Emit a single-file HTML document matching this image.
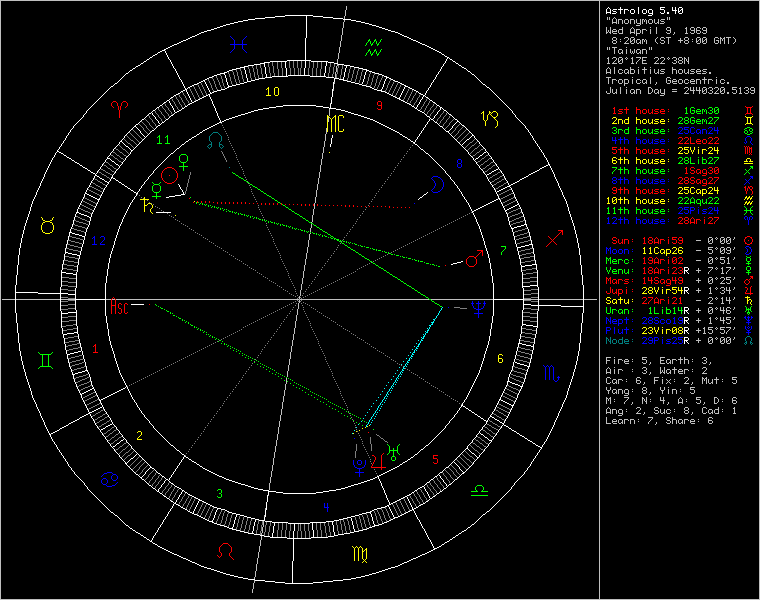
<!DOCTYPE html>
<html lang="en"><head><meta charset="utf-8"><title>Astrolog 5.40 - wheel chart</title>
<style>
html,body{margin:0;padding:0;background:#000}
body{position:relative;width:760px;height:600px;overflow:hidden;font-family:"Liberation Mono",monospace}
#info{position:absolute;left:606px;top:5px;width:150px;height:430px;font:10px/10px "Liberation Mono",monospace;color:#bfbfbf}
#info div{position:absolute;left:0;white-space:pre;height:10px}
#chart{position:absolute;left:0;top:0;display:block}
</style></head>
<body>
<div id="info">
<div style="top:0px"><span style="color:#fff">Astrolog 5.40</span></div>
<div style="top:10px"><span style="color:#bfbfbf">"Anonymous"</span></div>
<div style="top:20px"><span style="color:#bfbfbf">Wed April 9, 1969</span></div>
<div style="top:30px"><span style="color:#bfbfbf"> 8:20am (ST +8:00 GMT)</span></div>
<div style="top:40px"><span style="color:#bfbfbf">"Taiwan"</span></div>
<div style="top:50px"><span style="color:#bfbfbf">120°17E 22°38N</span></div>
<div style="top:60px"><span style="color:#bfbfbf">Alcabitius houses.</span></div>
<div style="top:70px"><span style="color:#bfbfbf">Tropical, Geocentric.</span></div>
<div style="top:80px"><span style="color:#bfbfbf">Julian Day = 2440320.5139</span></div>
<div style="top:100px"><span style="color:#f00"> 1st house:</span> <span style="color:#0f0"> 1Gem30</span></div>
<div style="top:110px"><span style="color:#ff0"> 2nd house:</span> <span style="color:#0f0">28Gem27</span></div>
<div style="top:120px"><span style="color:#0f0"> 3rd house:</span> <span style="color:#00f">25Can24</span></div>
<div style="top:130px"><span style="color:#00f"> 4th house:</span> <span style="color:#f00">22Leo22</span></div>
<div style="top:140px"><span style="color:#f00"> 5th house:</span> <span style="color:#ff0">25Vir24</span></div>
<div style="top:150px"><span style="color:#ff0"> 6th house:</span> <span style="color:#0f0">28Lib27</span></div>
<div style="top:160px"><span style="color:#0f0"> 7th house:</span> <span style="color:#f00"> 1Sag30</span></div>
<div style="top:170px"><span style="color:#00f"> 8th house:</span> <span style="color:#f00">28Sag27</span></div>
<div style="top:180px"><span style="color:#f00"> 9th house:</span> <span style="color:#ff0">25Cap24</span></div>
<div style="top:190px"><span style="color:#ff0">10th house:</span> <span style="color:#0f0">22Aqu22</span></div>
<div style="top:200px"><span style="color:#0f0">11th house:</span> <span style="color:#00f">25Pis24</span></div>
<div style="top:210px"><span style="color:#00f">12th house:</span> <span style="color:#f00">28Ari27</span></div>
<div style="top:230px"><span style="color:#f00"> Sun:</span> <span style="color:#f00">18Ari59</span>  <span style="color:#bfbfbf">- 0°00'</span></div>
<div style="top:240px"><span style="color:#00f">Moon:</span> <span style="color:#ff0">11Cap26</span>  <span style="color:#bfbfbf">- 5°09'</span></div>
<div style="top:250px"><span style="color:#0f0">Merc:</span> <span style="color:#f00">19Ari02</span>  <span style="color:#bfbfbf">- 0°51'</span></div>
<div style="top:260px"><span style="color:#0f0">Venu:</span> <span style="color:#f00">18Ari23</span><span style="color:#fff">R</span> <span style="color:#bfbfbf">+ 7°17'</span></div>
<div style="top:270px"><span style="color:#f00">Mars:</span> <span style="color:#f00">14Sag49</span>  <span style="color:#bfbfbf">+ 0°25'</span></div>
<div style="top:280px"><span style="color:#f00">Jupi:</span> <span style="color:#ff0">28Vir54</span><span style="color:#fff">R</span> <span style="color:#bfbfbf">+ 1°34'</span></div>
<div style="top:290px"><span style="color:#ff0">Satu:</span> <span style="color:#f00">27Ari21</span>  <span style="color:#bfbfbf">- 2°14'</span></div>
<div style="top:300px"><span style="color:#0f0">Uran:</span> <span style="color:#0f0"> 1Lib14</span><span style="color:#fff">R</span> <span style="color:#bfbfbf">+ 0°46'</span></div>
<div style="top:310px"><span style="color:#00f">Nept:</span> <span style="color:#00f">28Sco19</span><span style="color:#fff">R</span> <span style="color:#bfbfbf">+ 1°45'</span></div>
<div style="top:320px"><span style="color:#00f">Plut:</span> <span style="color:#ff0">23Vir08</span><span style="color:#fff">R</span> <span style="color:#bfbfbf">+15°57'</span></div>
<div style="top:330px"><span style="color:#007f7f">Node:</span> <span style="color:#00f">29Pis25</span><span style="color:#fff">R</span> <span style="color:#bfbfbf">+ 0°00'</span></div>
<div style="top:350px"><span style="color:#bfbfbf">Fire: 5, Earth: 3,</span></div>
<div style="top:360px"><span style="color:#bfbfbf">Air : 3, Water: 2</span></div>
<div style="top:370px"><span style="color:#bfbfbf">Car: 6, Fix: 2, Mut: 5</span></div>
<div style="top:380px"><span style="color:#bfbfbf">Yang: 8, Yin: 5</span></div>
<div style="top:390px"><span style="color:#bfbfbf">M: 7, N: 4, A: 5, D: 6</span></div>
<div style="top:400px"><span style="color:#bfbfbf">Ang: 2, Suc: 8, Cad: 1</span></div>
<div style="top:410px"><span style="color:#bfbfbf">Learn: 7, Share: 6</span></div>
</div>
<svg id="chart" width="760" height="600" viewBox="0 0 760 600" shape-rendering="crispEdges" fill="none" stroke-width="1" role="img" aria-label="Astrolog 5.40 wheel chart">
<rect width="760" height="600" fill="#000"/>
<g class="axes"><title>Ascendant-Descendant and Midheaven-Nadir axes</title><path stroke="#bfbfbf" transform="translate(0 .5)" d="M0 0m2 299h595"/><path stroke="#bfbfbf" transform="translate(.5)" d="M0 0m252 589v4m1-10v6m1-12v6m1-12v6m1-13v7m1-13v6m1-12v6m1-12v6m1-12v6m1-13v7m1-13v6m1-12v6m1-12v6m1-13v7m1-13v6m1-12v6m1-12v6m1-13v7m1-13v6m1-12v6m1-12v6m1-13v7m1-13v6m1-12v6m1-12v6m1-12v6m1-13v7m1-13v6m1-12v6m1-12v6m1-13v7m1-13v6m1-12v6m1-12v6m1-13v7m1-13v6m1-12v6m1-12v6m1-13v7m1-13v6m1-12v6m1-12v6m1-12v6m1-13v7m1-13v6m1-12v6m1-12v6m1-13v3m0 1v3m1-13v6m1-12v6m1-12v6m1-13v7m1-13v6m1-12v6m1-12v6m1-12v6m1-13v7m1-13v6m1-12v6m1-12v6m1-13v7m1-13v6m1-12v6m1-12v6m1-13v7m1-13v6m1-12v6m1-12v6m1-13v7m1-13v6m1-12v6m1-12v6m1-12v6m1-13v7m1-13v6m1-12v6m1-12v6m1-13v7m1-13v6m1-12v6m1-12v6m1-13v7m1-13v6m1-12v6m1-12v6m1-13v7m1-13v6m1-12v6m1-12v6m1-12v6m1-13v7m1-13v6m1-12v6m1-12v6m1-10v4"/></g>
<g class="degree-ticks"><title>Zodiac degree ring</title><path stroke="#7f7f7f" transform="translate(0 .5)" d="M0 0m200 82h1m197 0h1m-202 2h1m203 0h1m-209 2h1m-5 2h1m219 0h1m3 1h1m-232 3h1m233 0h1m-239 2h1m241 0h1m-237 1h1m229 0h1m-240 1h1m4 1h1m237 0h1m-248 1h1m255 0h1m-251 1h1m9 1h1m223 0h1m18 0h1m-258 1h1m251 0h1m-243 1h1m222 0h1m8 0h1m-252 1h1m24 0h1m219 0h1m24 0h1m-255 1h1m-20 1h1m23 0h1m227 0h1m13 0h1m9 0h1m-272 1h1m9 0h1m245 0h1m9 0h1m-276 1h1m9 0h1m14 0h1m248 0h1m-269 1h1m271 0h1m-272 1h1m13 0h1m241 0h1m13 0h1m-281 1h1m4 0h1m9 0h1m259 0h1m14 0h1m-285 1h1m9 0h1m257 0h1m-263 1h1m256 0h1m8 0h1m14 0h1m-292 1h1m10 0h1m263 0h1m10 0h1m-286 1h1m4 0h1m9 0h1m253 0h1m14 0h1m-294 1h1m14 0h1m281 0h1m4 0h1m-282 1h1m259 0h1m14 0h1m-286 1h1m279 0h1m-296 1h1m5 0h1m9 0h1m4 0h1m272 0h1m9 0h1m5 0h1m-310 1h1m5 0h1m290 0h1m4 0h1m5 0h1m-308 1h1m294 0h1m10 0h1m-312 1h1m5 0h1m14 0h1m273 0h1m14 0h1m-310 1h1m5 0h1m4 0h1m291 0h1m4 0h1m-313 1h1m4 0h1m10 0h1m284 0h1m4 0h1m15 0h1m-322 1h1m4 0h1m314 0h1m-320 1h1m4 0h1m4 0h1m297 0h1m9 0h1m-318 1h1m9 0h1m4 0h1m285 0h1m4 0h1m9 0h1m5 0h1m-322 1h1m9 0h1m293 0h1m9 0h1m5 0h1m-316 1h1m5 0h1m291 0h1m15 0h1m-330 1h1m15 0h1m311 0h1m5 0h1m-334 1h1m10 0h1m4 0h1m304 0h1m4 0h1m5 0h1m-332 1h1m10 0h1m4 0h1m302 0h1m10 0h1m-336 1h1m5 0h1m10 0h1m305 0h1m10 0h1m5 0h1m-340 1h1m5 0h1m10 0h1m303 0h1m5 0h1m4 0h1m5 0h1m-338 1h1m5 0h1m318 0h1m4 0h1m5 0h1m-342 1h1m5 0h1m5 0h1m316 0h1m4 0h1m5 0h1m-340 1h1m5 0h1m5 0h1m314 0h1m4 0h1m5 0h1m-338 1h1m5 0h1m5 0h1m317 0h1m5 0h1m-342 1h1m5 0h1m5 0h1m5 0h1m315 0h1m5 0h1m11 0h1m-352 1h1m5 0h1m5 0h1m5 0h1m313 0h1m5 0h1m11 0h1m-350 1h1m5 0h2m4 0h1m323 0h1m11 0h1m-348 1h1m6 0h1m4 0h1m321 0h1m11 0h1m4 0h1m-351 1h1m6 0h1m4 0h1m319 0h1m10 0h2m4 0h1m-349 1h2m5 0h1m333 0h1m5 0h1m-358 1h1m11 0h1m5 0h1m331 0h1m5 0h1m5 0h1m-362 1h1m11 0h1m335 0h1m4 0h2m5 0h1m-360 1h1m11 0h1m333 0h1m4 0h1m6 0h1m-358 1h1m11 0h1m331 0h1m4 0h1m6 0h1m-363 1h1m6 0h1m346 0h1m5 0h2m6 0h1m-368 1h2m5 0h2m343 0h1m5 0h1m6 0h2m-365 1h1m6 0h1m341 0h1m5 0h1m6 0h1m-369 1h1m6 0h1m6 0h1m345 0h1m6 0h1m-367 1h2m5 0h2m5 0h1m343 0h1m5 0h2m-364 1h1m6 0h1m5 0h1m341 0h1m5 0h1m-367 1h1m5 0h1m6 0h1m351 0h1m12 0h1m-378 1h2m4 0h2m5 0h2m347 0h2m11 0h2m-375 1h1m5 0h1m6 0h1m345 0h1m12 0h1m-372 1h1m5 0h1m363 0h1m6 0h1m-377 1h2m4 0h2m359 0h2m5 0h2m-374 1h1m5 0h1m357 0h1m6 0h1m-371 1h1m361 0h1m6 0h1m-383 1h1m13 0h2m357 0h2m5 0h2m6 0h1m-388 1h2m13 0h1m355 0h1m6 0h1m6 0h2m-385 1h1m374 0h1m6 0h1m-388 1h1m5 0h1m371 0h2m6 0h1m5 0h1m-392 1h2m4 0h2m368 0h1m6 0h2m4 0h2m-389 1h1m5 0h1m373 0h1m5 0h1m-386 1h1m5 0h1m371 0h1m5 0h1m-392 1h1m7 0h2m4 0h2m367 0h2m4 0h2m-390 1h2m7 0h1m5 0h1m365 0h1m5 0h1m-386 1h2m6 0h1m375 0h1m-390 1h1m6 0h1m6 0h2m371 0h2m13 0h1m-402 1h2m5 0h2m6 0h1m369 0h1m13 0h2m-399 1h1m6 0h2m387 0h1m-396 1h2m6 0h2m383 0h2m-393 1h2m6 0h1m380 0h2m7 0h1m-397 1h1m385 0h1m7 0h2m-395 1h2m381 0h2m7 0h1m-406 1h1m14 0h1m379 0h1m7 0h2m5 0h1m-410 1h2m398 0h2m5 0h2m-407 1h1m396 0h1m6 0h1m-404 1h2m392 0h2m5 0h2m-409 1h1m7 0h2m389 0h1m5 0h2m7 0h1m-414 1h2m7 0h1m393 0h1m7 0h2m-411 1h1m7 0h2m389 0h2m7 0h1m-415 1h1m6 0h2m7 0h1m387 0h1m7 0h2m-413 1h2m6 0h2m399 0h2m-409 1h2m6 0h1m397 0h1m-405 1h2m5 0h2m393 0h2m-410 1h1m7 0h2m5 0h1m391 0h1m13 0h2m-422 1h2m7 0h2m407 0h2m-418 1h2m7 0h2m403 0h2m-414 1h2m7 0h1m400 0h2m-410 1h2m404 0h2m8 0h2m-416 1h2m400 0h2m8 0h2m-412 1h2m397 0h1m8 0h2m-4 1h2m-423 1h1m418 0h2m8 0h2m-430 1h2m414 0h2m8 0h2m-426 1h2m411 0h1m8 0h2m-429 1h1m6 0h2m416 0h2m6 0h2m-434 1h2m6 0h2m412 0h2m6 0h2m-430 1h2m6 0h2m408 0h2m6 0h2m-426 1h2m6 0h2m405 0h1m6 0h2m-431 1h2m7 0h2m416 0h2m-427 1h2m7 0h2m412 0h2m-423 1h2m7 0h2m409 0h1m-419 1h2m-9 1h2m7 0h2m428 0h2m-439 1h2m7 0h2m424 0h2m-435 1h2m7 0h2m419 0h3m-431 1h3m423 0h2m-425 1h2m419 0h2m9 0h2m-432 1h2m415 0h2m9 0h2m-5 1h3m-6 1h3m-439 1h2m432 0h2m9 0h2m-445 1h2m428 0h2m9 0h2m-441 1h2m434 0h3m-437 1h3m429 0h2m-442 1h2m9 0h2m425 0h2m9 0h2m-449 1h3m8 0h2m421 0h2m8 0h3m-444 1h4m433 0h4m-437 1h3m427 0h3m-443 1h2m11 0h2m423 0h2m-438 1h3m0 1h4m0 1h3m-13 1h2m11 0h2m438 0h2m-453 1h3m445 0h3m-448 1h4m437 0h4m-441 1h3m431 0h3m-434 1h2m427 0h2m12 0h2m-5 1h3m-7 1h4m-7 1h3m-451 1h3m443 0h2m10 0h3m-458 1h4m447 0h4m-451 1h4m439 0h4m-443 1h3m433 0h3m-451 1h3m457 0h3m-460 1h4m449 0h4m-453 1h4m441 0h4m-445 1h3m435 0h3m-453 1h3m0 1h4m0 1h4m0 1h3m-15 1h3m461 0h3m-464 1h4m452 0h5m-457 1h5m443 0h4m-447 1h3m437 0h3m10 1h3m-8 1h5m-9 1h4m-7 1h3m-457 1h4m461 0h4m-465 1h6m449 0h6m-455 1h4m441 0h4m-460 2h4m463 0h4m-467 1h6m451 0h6m-457 1h4m443 0h4m-462 2h4m0 1h7m0 1h4m-15 2h4m465 0h4m-469 1h6m453 0h6m-459 1h4m445 0h4m7 2h4m-11 1h7m-11 1h4m-464 3h7m461 0h7m-468 1h7m447 0h7m-469 3h7m462 0h8m-470 1h8m447 0h7m-469 3h7m0 1h8m-15 3h7m463 0h7m-470 1h7m449 0h7m0 3h7m-14 1h7m-470 3h7m463 0h7m-470 1h7m449 0h7m-463 2h7m449 0h7m-470 1h7m463 0h7m-470 3h7m-14 1h7m0 3h7m449 0h7m-470 1h7m463 0h7m-15 3h7m0 1h8m-470 3h8m447 0h7m-469 1h7m462 0h8m-469 3h7m447 0h7m-468 1h7m461 0h7m-464 3h4m-11 1h7m-11 1h4m7 2h4m445 0h4m-459 1h6m453 0h6m-469 1h4m465 0h4m-15 2h4m0 1h7m0 1h4m-462 2h4m443 0h4m-457 1h6m451 0h6m-467 1h4m463 0h4m-460 2h4m441 0h4m-455 1h6m449 0h6m-465 1h4m461 0h4m-457 1h3m-8 1h5m-9 1h4m-7 1h3m10 1h3m437 0h3m-448 1h5m443 0h4m-456 1h4m452 0h5m-464 1h3m461 0h3m-15 1h3m0 1h4m0 1h4m0 1h3m-453 1h3m435 0h3m-445 1h4m441 0h4m-453 1h4m449 0h4m-460 1h3m457 0h3m-451 1h3m433 0h3m-443 1h4m439 0h4m-451 1h4m447 0h4m-458 1h3m10 0h2m443 0h3m-451 1h3m-7 1h4m-7 1h3m-5 1h2m12 0h2m427 0h2m-434 1h3m431 0h3m-441 1h4m437 0h4m-448 1h3m445 0h3m-453 1h2m438 0h2m11 0h2m-13 1h3m0 1h4m0 1h3m-438 1h2m423 0h2m11 0h2m-443 1h3m427 0h3m-437 1h4m433 0h4m-444 1h3m8 0h2m421 0h2m8 0h3m-449 1h2m9 0h2m425 0h2m9 0h2m-443 1h3m429 0h2m-436 1h2m434 0h3m-441 1h2m9 0h2m428 0h2m-445 1h2m9 0h2m432 0h2m-439 1h3m-6 1h3m-5 1h2m9 0h2m415 0h2m-432 1h2m9 0h2m419 0h2m-426 1h3m423 0h2m-430 1h2m420 0h2m6 0h3m-435 1h2m424 0h2m7 0h2m-439 1h2m428 0h2m7 0h2m-9 1h2m-420 1h2m409 0h1m8 0h2m-424 1h2m412 0h2m8 0h2m-428 1h2m416 0h2m8 0h2m-432 1h2m6 0h2m405 0h1m6 0h2m-426 1h2m6 0h2m408 0h2m6 0h2m-430 1h2m6 0h2m412 0h2m6 0h2m-433 1h1m6 0h2m416 0h2m6 0h2m-430 1h2m8 0h2m410 0h2m-426 1h2m8 0h2m414 0h2m-429 1h1m8 0h2m418 0h2m-424 1h2m-4 1h2m8 0h2m397 0h1m-412 1h2m8 0h2m400 0h2m-415 1h1m8 0h2m404 0h2m-410 1h2m401 0h1m6 0h2m-414 1h2m404 0h2m6 0h2m-418 1h2m408 0h2m6 0h2m-421 1h1m14 0h1m391 0h1m5 0h2m6 0h2m-410 1h2m393 0h2m5 0h2m-405 1h1m397 0h1m6 0h2m-409 1h2m399 0h2m6 0h2m-413 1h2m7 0h1m387 0h1m7 0h2m6 0h1m-415 1h1m7 0h2m389 0h2m7 0h1m-411 1h2m7 0h1m393 0h1m7 0h2m-414 1h1m7 0h2m5 0h1m389 0h2m7 0h1m-409 1h2m5 0h2m392 0h2m-404 1h1m6 0h1m396 0h1m-407 1h2m5 0h2m398 0h2m-410 1h1m5 0h2m7 0h1m379 0h1m14 0h1m-406 1h1m7 0h2m381 0h2m-395 1h2m7 0h1m385 0h1m-397 1h1m7 0h2m380 0h1m6 0h2m-393 1h2m383 0h2m6 0h2m-396 1h1m387 0h2m6 0h1m-399 1h2m13 0h1m369 0h1m6 0h1m6 0h2m-402 1h1m13 0h2m371 0h2m5 0h2m6 0h1m-390 1h1m375 0h1m6 0h2m-386 1h1m5 0h1m365 0h1m5 0h1m7 0h2m-390 1h2m4 0h2m367 0h2m4 0h2m7 0h1m-392 1h1m5 0h1m371 0h1m5 0h1m-386 1h1m5 0h1m373 0h1m5 0h1m-389 1h2m4 0h2m6 0h1m368 0h2m4 0h2m-392 1h1m5 0h1m6 0h2m371 0h1m5 0h1m-388 1h1m6 0h1m374 0h1m-385 1h2m6 0h1m6 0h1m355 0h1m13 0h2m-388 1h1m6 0h2m5 0h2m357 0h2m13 0h1m-383 1h1m6 0h1m361 0h1m-371 1h1m6 0h1m357 0h1m5 0h1m-374 1h2m5 0h2m359 0h2m4 0h2m-377 1h1m6 0h1m363 0h1m5 0h1m-372 1h1m12 0h1m345 0h1m6 0h1m5 0h1m-375 1h2m11 0h2m347 0h2m5 0h2m4 0h2m-378 1h1m12 0h1m351 0h1m6 0h1m5 0h1m-367 1h1m5 0h1m341 0h1m5 0h1m6 0h1m-364 1h2m5 0h1m343 0h1m5 0h2m5 0h2m-367 1h1m6 0h1m345 0h1m6 0h1m6 0h1m-369 1h1m6 0h1m5 0h1m341 0h1m6 0h1m-365 1h2m5 0h2m5 0h1m343 0h1m6 0h2m-368 1h1m6 0h1m6 0h1m345 0h2m6 0h1m-363 1h1m6 0h1m4 0h1m331 0h1m11 0h1m-358 1h1m5 0h2m4 0h1m333 0h1m11 0h1m-360 1h1m5 0h1m5 0h1m335 0h1m11 0h1m-362 1h1m5 0h1m5 0h1m331 0h1m5 0h1m11 0h1m-358 1h1m4 0h2m333 0h1m5 0h1m-348 1h1m4 0h1m11 0h1m319 0h1m4 0h1m5 0h2m-351 1h1m4 0h1m11 0h1m321 0h1m4 0h1m6 0h1m-348 1h1m11 0h1m323 0h1m4 0h1m6 0h1m-350 1h1m11 0h1m5 0h1m313 0h1m5 0h1m4 0h2m5 0h1m-352 1h1m11 0h1m5 0h1m315 0h1m5 0h1m5 0h1m5 0h1m-342 1h1m5 0h1m317 0h1m5 0h1m5 0h1m-338 1h1m5 0h1m4 0h1m314 0h1m5 0h1m5 0h1m-340 1h1m5 0h1m4 0h1m316 0h1m5 0h1m5 0h1m-342 1h1m5 0h1m4 0h1m318 0h1m5 0h1m-338 1h1m5 0h1m4 0h1m5 0h1m303 0h1m10 0h1m5 0h1m-340 1h1m5 0h1m4 0h1m5 0h1m305 0h1m10 0h1m5 0h1m-336 1h1m10 0h1m302 0h1m4 0h1m10 0h1m-332 1h1m10 0h1m304 0h1m4 0h1m10 0h1m-334 1h1m5 0h1m4 0h1m306 0h1m4 0h1m10 0h1m-330 1h1m15 0h1m291 0h1m5 0h1m-316 1h1m15 0h1m293 0h1m5 0h1m-318 1h1m5 0h1m9 0h1m4 0h1m285 0h1m4 0h1m9 0h1m-318 1h1m9 0h1m297 0h1m9 0h1m-320 1h1m9 0h1m299 0h1m4 0h1m4 0h1m-322 1h1m15 0h1m4 0h1m284 0h1m10 0h1m4 0h1m-308 1h1m291 0h1m10 0h1m-310 1h1m14 0h1m273 0h1m14 0h1m5 0h1m-312 1h1m10 0h1m294 0h1m-308 1h1m5 0h1m4 0h1m290 0h1m5 0h1m-310 1h1m5 0h1m9 0h1m272 0h1m4 0h1m9 0h1m5 0h1m-296 1h1m279 0h1m-286 1h1m14 0h1m259 0h1m-282 1h1m4 0h1m281 0h1m14 0h1m-294 1h1m14 0h1m253 0h1m9 0h1m4 0h1m-286 1h1m10 0h1m263 0h1m10 0h1m-292 1h1m14 0h1m8 0h1m256 0h1m-263 1h1m257 0h1m9 0h1m-285 1h1m14 0h1m259 0h1m9 0h1m4 0h1m-281 1h1m13 0h1m241 0h1m13 0h1m-272 1h1m271 0h1m-269 1h1m4 0h1m243 0h1m14 0h1m9 0h1m-276 1h1m9 0h1m245 0h1m9 0h1m-272 1h1m23 0h1m227 0h1m23 0h1m-20 1h1m-255 1h1m24 0h1m219 0h1m24 0h1m-252 1h1m8 0h1m222 0h1m-243 1h1m251 0h1m-258 1h1m18 0h1m7 0h1m207 0h1m7 0h1m9 1h1m-251 1h1m227 0h1m27 0h1m-248 1h1m237 0h1m-216 1h1m191 0h1m27 0h1m-240 1h1m229 0h1m-237 1h1m27 0h1m185 0h1m27 0h1m-239 2h1m233 0h1m-232 3h1"/><path stroke="#7f7f7f" transform="translate(.5)" d="M0 0m139 467v2m3 1v2m1-344v2m3-4v2m2 347v2m1-361v2m0 5v2m0 356v2m3-363v2m0 355v2m0 5v2m3-375v2m0 11v2m0 347v2m0 5v2m0 4v2m3-380v2m0 5v2m0 359v2m0 4v2m3-372v2m0 5v2m0 357v2m1-374v2m0 383v2m2-377v2m1-14v2m0 4v2m0 375v2m0 4v2m3-387v2m0 4v2m0 367v2m0 4v2m1 5v2m1-4v2m1-384v2m0 371v2m0 5v2m1-395v2m0 397v2m1-11v2m1-389v2m0 383v2m0 6v2m1-393v2m0 387v2m1-398v2m1 8v2m0 381v2m1-392v2m1-7v2m0 5v2m0 398v2m2-406v2m0 5v2m0 392v2m1-401v2m0 395v2m1-406v2m0 409v2m1-403v2m0 389v2m1-400v2m0 403v2m1-405v2m0 399v2m0 6v2m1-4v2m1-406v2m0 393v2m0 5v2m1-4v2m0 6v2m1-422v2m0 408v2m0 6v2m1-418v2m0 404v2m0 6v2m1-414v2m0 408v2m1-410v2m0 404v2m1-416v2m0 8v2m0 400v2m1-412v2m0 8v2m1-10v2m1 0v2m0 418v2m1-430v2m0 8v2m0 414v2m1-426v2m0 8v2m0 410v2m1-422v2m0 416v2m0 6v2m1-434v2m0 6v2m0 412v2m0 6v2m1-430v2m0 6v2m0 408v2m0 6v2m1-426v2m0 6v2m0 412v2m1-422v2m0 416v2m0 8v2m1-428v2m0 412v2m0 8v2m1-424v2m0 418v2m1-4v2m1-434v2m0 428v2m0 7v2m1-439v2m0 424v2m0 7v2m1-435v2m0 420v2m0 6v3m1-431v3m0 423v2m1-436v2m0 9v2m0 419v2m1-432v2m0 9v2m0 415v2m1-428v3m1 0v3m1-11v2m0 9v2m0 432v2m1-445v2m0 9v2m0 428v2m1-441v2m0 434v3m1-437v3m0 429v2m1-442v2m0 9v2m0 425v2m0 9v2m1-449v3m0 8v2m0 421v2m0 8v3m1-444v4m0 433v4m1-437v3m0 427v3m1-430v2m0 423v2m0 11v2m1-5v3m1-7v4m1-7v3m1-445v2m0 438v2m0 11v2m1-453v3m0 445v3m1-448v4m0 437v4m1-441v3m0 431v3m1-448v2m0 12v2m0 427v2m1-443v3m1 0v4m1 0v3m1-13v3m0 10v2m0 443v3m1-458v4m0 447v4m1-451v4m0 439v4m1-443v3m0 433v3m1-451v3m0 457v3m1-460v4m0 449v4m1-453v4m0 441v4m1-445v3m0 435v3m1 9v3m1-7v4m1-8v4m1-7v3m1-455v3m0 461v3m1-464v4m0 452v5m1-457v5m0 443v4m1-447v3m0 437v3m1-456v3m1 0v4m1 0v5m1 0v3m1-15v4m0 461v4m1-465v6m0 449v6m1-455v4m0 441v4m2-460v4m0 463v4m1-467v6m0 451v6m1-457v4m0 443v4m2 7v4m1-11v7m1-11v4m2-462v4m0 465v4m1-469v6m0 453v6m1-459v4m0 445v4m2-464v4m1 0v7m1 0v4m3-15v7m0 461v7m1-468v7m0 447v7m3-469v7m0 462v8m1-470v8m0 447v7m3 0v8m1-15v7m3-469v7m0 463v7m1-470v7m0 449v7m3-470v7m1 0v7m3-14v7m0 463v7m1-470v7m0 449v7m2-463v7m0 449v7m1-470v7m0 463v7m3-14v7m1 0v7m3-470v7m0 449v7m1-470v7m0 463v7m3-470v8m1-15v7m3 0v8m0 447v7m1-469v7m0 462v8m3-469v7m0 447v7m1-468v7m0 461v7m3-15v4m1 0v7m1 0v4m2-464v4m0 445v4m1-459v6m0 453v6m1-469v4m0 465v4m2-462v4m1-11v7m1-11v4m2 7v4m0 443v4m1-457v6m0 451v6m1-467v4m0 463v4m2-460v4m0 441v4m1-455v6m0 449v6m1-465v4m0 461v4m1-15v3m1 0v4m1 0v5m1 0v3m1-456v3m0 437v3m1-448v5m0 443v4m1-456v4m0 452v5m1-464v3m0 461v3m1-455v3m1-7v4m1-8v4m1-7v3m1 9v3m0 435v3m1-445v4m0 441v4m1-453v4m0 449v4m1-460v3m0 457v3m1-451v3m0 433v3m1-443v4m0 439v4m1-451v4m0 447v4m1-458v3m0 443v2m0 10v3m1-13v3m1 0v4m1 0v3m1-443v2m0 427v2m0 12v2m1-448v3m0 431v3m1-441v4m0 437v4m1-448v3m0 445v3m1-453v2m0 11v2m0 438v2m1-445v3m1-7v4m1-7v3m1-5v2m0 11v2m0 423v2m1-430v3m0 427v3m1-437v4m0 433v4m1-444v3m0 8v2m0 421v2m0 8v3m1-449v2m0 9v2m0 425v2m0 9v2m1-443v3m0 429v2m1-436v2m0 434v3m1-441v2m0 428v2m0 9v2m1-445v2m0 432v2m0 9v2m1-11v3m1 0v3m1-428v2m0 415v2m0 9v2m1-432v2m0 419v2m0 9v2m1-437v3m0 423v2m1-430v2m0 7v2m0 419v3m1-435v2m0 7v2m0 424v2m1-439v2m0 7v2m0 428v2m1-434v2m1-4v2m0 7v2m1-13v2m0 7v2m0 412v2m1-427v2m0 7v2m0 416v2m1-422v2m0 6v2m0 412v2m1-426v2m0 6v2m0 408v2m0 6v2m1-430v2m0 6v2m0 412v2m0 6v2m1-426v2m0 416v2m0 6v2m1-430v2m0 420v2m1-426v2m0 414v2m0 8v2m1-10v2m0 8v2m1-10v2m1-408v2m0 406v2m1-412v2m0 400v2m0 8v2m1-416v2m0 404v2m0 8v2m1-420v2m0 408v2m1-414v2m0 7v2m0 403v2m1-418v2m0 7v2m0 407v2m1-413v2m0 411v2m1-417v2m0 5v2m0 393v2m1-406v2m1-4v2m0 6v2m0 399v2m1-405v2m0 403v2m1-400v2m0 389v2m1-403v2m0 409v2m1-406v2m0 395v2m1-401v2m0 392v2m0 5v2m2-406v2m0 398v2m0 5v2m1-7v2m1-392v2m0 381v2m1 8v2m1-398v2m0 387v2m1-393v2m0 6v2m0 383v2m1-389v2m1-11v2m0 5v2m0 390v2m1-388v2m0 371v2m1-384v2m1-4v2m1 5v2m0 4v2m0 367v2m0 4v2m3-387v2m0 4v2m0 375v2m0 4v2m1-14v2m2-377v2m0 383v2m1-374v2m0 357v2m0 5v2m3-372v2m0 4v2m0 359v2m0 5v2m3-380v2m0 4v2m0 5v2m0 347v2m0 11v2m3-375v2m0 5v2m0 355v2m3-363v2m0 5v2m0 356v2m1-8v2m3-5v2m2-346v2m1 340v2m2-341v2"/><path stroke="#fff" transform="translate(0 .5)" d="M0 0m405 86h1m-221 3h1m237 7h1m-3 3h1m-254 1h1m23 2h1m225 2h1m-248 1h1m244 2h1m24 0h1m-3 3h1m-2 1h1m-288 1h1m23 0h1m260 2h1m-284 1h1m281 0h1m-282 1h1m278 2h1m-278 1h1m0 1h1m299 1h1m-2 1h1m-298 1h1m295 0h1m-2 1h1m-2 1h1m-319 1h1m0 1h1m0 1h1m313 0h1m-314 1h1m311 0h1m-312 1h1m309 0h1m-2 1h1m-308 2h1m0 1h1m0 1h1m328 0h1m-329 1h1m326 0h1m-2 1h1m-2 1h1m-3 1h2m-3 1h1m-346 1h1m343 0h1m-344 1h1m341 0h1m-342 1h1m339 0h1m-340 1h1m337 0h1m-338 1h1m0 1h2m0 1h1m0 1h1m0 1h1m0 1h1m354 1h1m-3 1h2m-3 1h1m-2 1h1m-3 1h2m-3 1h1m-373 1h1m370 0h1m-371 1h2m366 0h2m-368 1h1m364 0h1m-365 1h1m0 1h2m0 1h1m0 1h1m0 1h2m0 1h1m379 3h1m-3 1h2m-4 1h2m-4 1h2m-3 1h1m-3 1h2m-4 1h2m-393 1h1m389 0h1m-390 1h2m0 1h1m0 1h2m0 1h2m0 1h1m0 1h2m0 1h1m401 3h1m-3 1h2m-4 1h2m-4 1h2m-4 1h2m-4 1h2m-4 1h2m-3 1h1m-411 1h1m0 1h2m0 1h2m0 1h2m0 1h2m0 1h2m0 1h2m418 5h2m-4 1h2m-4 1h2m-4 1h2m-4 1h2m-4 1h2m-4 1h2m-430 2h2m0 1h2m0 1h3m0 1h3m0 1h2m0 1h2m433 7h2m-5 1h3m-7 1h4m-7 1h3m-5 1h2m-444 4h2m0 1h3m0 1h4m0 1h3m0 1h2m445 8h3m-7 1h4m-8 1h4m-7 1h3m-456 5h3m0 1h4m0 1h5m0 1h3m452 9h4m-11 1h7m-11 1h4m-463 6h4m0 1h7m0 1h4m453 11h8m-15 1h7m-469 7h7m0 1h7m449 10h7m0 1h7m-470 7h8m-15 1h7m454 11h4m0 1h7m0 1h4m-463 6h4m-11 1h7m-11 1h4m452 9h3m0 1h4m0 1h5m0 1h3m-456 5h3m-7 1h4m-8 1h4m-7 1h3m445 8h2m0 1h3m0 1h4m0 1h3m0 1h2m-444 4h2m-5 1h3m-7 1h4m-7 1h3m-5 1h2m433 7h2m0 1h2m0 1h3m0 1h3m0 1h2m0 1h2m-430 2h2m-4 1h2m-4 1h2m-4 1h2m-4 1h2m-4 1h2m-4 1h2m418 5h1m0 1h2m0 1h2m0 1h2m0 1h2m0 1h2m0 1h2m-411 1h1m-3 1h2m-4 1h2m-4 1h2m-4 1h2m-4 1h2m-4 1h2m-3 1h1m401 3h1m0 1h2m0 1h1m0 1h2m0 1h2m0 1h1m0 1h2m-390 1h1m389 0h1m-393 1h2m-4 1h2m-4 1h2m-3 1h1m-3 1h2m-4 1h2m-3 1h1m379 3h1m0 1h2m0 1h1m0 1h1m0 1h2m0 1h1m-365 1h1m364 0h1m-368 1h2m366 0h2m-371 1h1m370 0h1m-373 1h1m-3 1h2m-3 1h1m-2 1h1m-3 1h2m-3 1h1m354 1h1m0 1h1m0 1h1m0 1h1m0 1h1m0 1h2m-338 1h1m337 0h1m-340 1h1m339 0h1m-342 1h1m341 0h1m-344 1h1m343 0h1m-347 1h2m-3 1h1m-2 1h1m-2 1h1m-2 1h1m326 0h1m-329 1h1m328 0h1m0 1h1m0 1h1m0 1h1m-309 1h1m-2 1h1m-2 1h1m311 0h1m-314 1h1m313 0h1m-316 1h1m315 0h1m0 1h1m-320 2h1m-2 1h1m295 0h1m-298 1h1m-2 1h1m299 1h1m0 1h1m-278 1h1m278 2h1m-282 1h1m281 0h1m-284 1h1m260 2h1m23 0h1m-288 1h1m-2 1h1m-3 3h1m24 0h1m243 0h1m-247 3h1m225 2h1m23 2h1m-254 1h1m21 1h1m-25 2h1m237 7h1"/><path stroke="#fff" transform="translate(.5)" d="M0 0m140 131v2m5 339v2m7-361v2m3 2v2m3 2v2m0 366v2m3-6v2m3-6v2m5-382v2m1 0v2m2 1v2m1 0v2m1 0v2m2 388v2m2-5v2m1-4v2m2-5v2m5-404v2m1 0v2m1 0v2m1 0v2m1 0v2m1 0v2m2 409v2m1-4v2m1-4v2m1-4v2m1-4v2m1-4v2m6-423v2m1 0v2m1 0v2m1 0v2m1 0v2m1 0v2m1 0v2m2 426v2m1-4v2m1-5v3m1-6v3m1-5v2m1-4v2m7-437v2m1 0v3m1 0v4m1 0v3m1 0v2m4 440v2m1-5v3m1-7v4m1-7v3m1-5v2m8-450v3m1 0v4m1 0v4m1 0v3m5 450v3m1-8v5m1-9v4m1-7v3m9-459v4m1 0v7m1 0v4m6 455v4m1-11v7m1-11v4m11-465v7m1 0v8m7 455v7m1-14v7m10-463v7m1-14v7m7 455v7m1 0v8m11-465v4m1-11v7m1-11v4m6 455v4m1 0v7m1 0v4m9-459v3m1-8v5m1-9v4m1-7v3m5 450v3m1 0v4m1 0v4m1 0v3m8-450v2m1-5v3m1-7v4m1-7v3m1-5v2m4 440v2m1 0v3m1 0v4m1 0v3m1 0v2m7-437v2m1-4v2m1-5v3m1-6v3m1-5v2m1-4v2m2 426v2m1 0v2m1 0v2m1 0v2m1 0v2m1 0v2m1 0v2m5-422v2m1-4v2m1-4v2m1-4v2m1-4v2m1-4v2m3 408v2m1 0v2m1 0v2m1 0v2m1 0v2m1 0v2m5-404v2m2-5v2m1-4v2m2-5v2m2 388v2m1 0v2m2 1v2m1 0v2m1 0v2m5-382v2m3-6v2m3-6v2m0 366v2m3 2v2m3 2v2m6-360v2m7 339v2"/></g>
<g class="rings"><title>Wheel rings</title><path stroke="#fff" transform="translate(0 .5)" d="M0 0m285 15h28m-38 1h10m28 0h10m-58 1h10m48 0h10m-78 1h10m68 0h10m-95 1h7m88 0h8m-108 1h5m103 0h5m-118 1h5m113 0h5m-127 1h4m123 0h4m-135 1h4m131 0h4m-143 1h4m139 0h3m-149 1h3m146 0h4m-156 1h3m153 0h3m-162 1h3m159 0h3m-168 1h3m165 0h3m-174 1h3m171 0h3m-181 1h4m177 0h3m-187 1h3m184 0h4m-194 1h3m191 0h3m-199 1h2m197 0h2m-203 1h2m201 0h2m-207 1h2m205 0h2m-212 1h3m209 0h3m-217 1h2m215 0h2m-221 1h2m219 0h2m-225 1h2m223 0h2m-230 1h3m227 0h3m-235 1h2m233 0h2m-239 1h2m237 0h2m-243 1h2m241 0h2m-248 1h3m245 0h3m-253 1h2m251 0h2m-257 1h2m255 0h2m-261 1h2m259 0h2m-265 1h2m263 0h2m-269 1h2m267 0h2m-273 1h2m271 0h2m-277 1h2m275 0h2m-281 1h2m279 0h2m-284 1h1m283 0h1m-287 1h2m285 0h2m-291 1h2m289 0h1m-293 1h1m292 0h2m-297 1h2m295 0h2m-300 1h1m299 0h1m-303 1h2m301 0h2m-306 1h1m140 0h24m141 0h1m-309 1h2m124 0h17m24 0h17m125 0h2m-312 1h1m120 0h6m58 0h6m121 0h1m-315 1h2m117 0h4m70 0h4m118 0h2m-318 1h1m113 0h6m78 0h6m114 0h1m-321 1h2m108 0h6m90 0h6m109 0h2m-325 1h2m106 0h4m102 0h4m107 0h1m-327 1h1m104 0h4m110 0h5m103 0h2m-331 1h2m101 0h4m119 0h4m101 0h2m-334 1h1m99 0h4m127 0h4m99 0h1m-337 1h2m97 0h3m135 0h2m98 0h1m-339 1h1m97 0h2m140 0h3m96 0h2m-342 1h1m95 0h3m145 0h3m95 0h1m-345 1h2m92 0h4m151 0h4m92 0h1m-347 1h1m91 0h3m159 0h3m90 0h2m-350 1h1m89 0h3m71 0h22m72 0h2m90 0h1m-352 1h1m88 0h2m58 0h16m22 0h16m58 0h3m88 0h1m-354 1h1m86 0h3m53 0h7m54 0h8m53 0h2m87 0h1m-356 1h1m85 0h2m50 0h6m69 0h5m50 0h2m86 0h1m-358 1h1m84 0h2m48 0h4m80 0h4m48 0h2m85 0h1m-360 1h1m83 0h2m46 0h4m88 0h4m46 0h2m84 0h1m-362 1h1m82 0h2m44 0h4m96 0h4m44 0h3m82 0h1m-364 1h1m81 0h2m43 0h3m104 0h4m43 0h2m81 0h1m-367 1h2m80 0h2m41 0h4m111 0h4m41 0h2m80 0h1m-369 1h1m79 0h3m39 0h4m119 0h3m40 0h2m79 0h2m-372 1h1m78 0h2m38 0h4m126 0h4m38 0h2m79 0h1m-375 1h2m77 0h2m37 0h3m134 0h4m36 0h2m78 0h1m-377 1h1m77 0h2m37 0h2m141 0h2m36 0h2m77 0h2m-380 1h1m77 0h1m37 0h2m145 0h2m36 0h2m77 0h1m-382 1h1m76 0h2m34 0h4m149 0h3m35 0h2m76 0h1m-384 1h1m75 0h2m32 0h4m156 0h4m33 0h2m75 0h1m-386 1h1m74 0h2m31 0h3m164 0h4m31 0h2m74 0h1m-388 1h1m74 0h1m31 0h2m171 0h2m31 0h1m74 0h1m-390 1h1m73 0h2m30 0h2m175 0h2m30 0h2m73 0h1m-392 1h1m72 0h2m30 0h2m179 0h2m30 0h2m72 0h1m-394 1h1m71 0h2m30 0h2m183 0h2m30 0h2m71 0h1m-396 1h1m71 0h1m30 0h2m187 0h2m30 0h1m71 0h1m-398 1h1m70 0h2m29 0h2m191 0h2m29 0h2m70 0h1m-400 1h1m70 0h1m29 0h2m195 0h2m29 0h1m70 0h1m-402 1h1m70 0h1m28 0h2m199 0h2m28 0h1m70 0h1m-404 1h1m69 0h2m27 0h2m203 0h2m27 0h2m69 0h1m-406 1h1m69 0h1m27 0h2m207 0h2m27 0h1m69 0h1m-408 1h1m68 0h2m26 0h2m211 0h2m26 0h2m68 0h1m-410 1h1m68 0h1m26 0h2m215 0h2m26 0h1m68 0h1m-412 1h1m68 0h1m25 0h2m219 0h2m25 0h1m68 0h1m-414 1h1m67 0h2m25 0h1m95 0h33m95 0h1m25 0h2m67 0h1m-416 1h1m67 0h1m25 0h2m89 0h7m33 0h7m89 0h2m25 0h1m67 0h1m-418 1h1m66 0h2m25 0h1m84 0h7m47 0h6m85 0h1m25 0h2m66 0h1m-420 1h1m66 0h1m25 0h2m79 0h6m60 0h7m79 0h2m25 0h1m66 0h1m-422 1h1m66 0h1m25 0h1m76 0h5m73 0h5m76 0h1m25 0h1m66 0h1m-424 1h1m65 0h2m24 0h2m73 0h4m83 0h4m73 0h2m24 0h2m65 0h1m-360 1h1m24 0h2m72 0h3m91 0h3m72 0h2m24 0h1m-296 1h1m23 0h2m71 0h3m97 0h3m71 0h2m23 0h1m-363 1h1m63 0h2m23 0h1m70 0h3m103 0h3m70 0h1m23 0h1m64 0h1m-430 1h1m63 0h1m24 0h1m67 0h4m109 0h4m67 0h1m23 0h2m63 0h1m-368 1h1m23 0h2m65 0h3m117 0h3m65 0h1m24 0h1m-306 1h1m23 0h1m64 0h3m123 0h3m63 0h2m23 0h1m-371 1h1m62 0h1m23 0h1m62 0h3m129 0h3m62 0h1m23 0h1m62 0h1m-436 1h1m62 0h1m23 0h1m60 0h3m135 0h3m60 0h1m23 0h1m62 0h1m-438 1h1m61 0h2m22 0h2m58 0h3m141 0h3m58 0h2m22 0h2m61 0h1m-440 1h1m61 0h1m23 0h1m58 0h2m147 0h2m58 0h1m23 0h1m61 0h1m-442 1h1m61 0h1m23 0h1m57 0h2m151 0h2m57 0h1m23 0h1m61 0h1m-444 1h1m61 0h1m22 0h2m55 0h3m155 0h2m56 0h2m22 0h1m61 0h1m-446 1h1m61 0h1m22 0h1m55 0h2m160 0h2m56 0h1m22 0h1m61 0h1m-448 1h1m60 0h2m22 0h1m54 0h2m164 0h2m55 0h1m22 0h1m61 0h1m-450 1h1m60 0h1m22 0h2m53 0h2m168 0h2m54 0h1m22 0h2m60 0h1m-391 1h1m22 0h1m53 0h2m172 0h2m53 0h2m22 0h1m-332 1h1m22 0h1m52 0h2m176 0h2m53 0h1m22 0h1m-394 1h1m59 0h1m22 0h1m51 0h2m180 0h2m52 0h1m22 0h1m59 0h1m-456 1h1m59 0h1m22 0h1m50 0h2m184 0h2m51 0h1m22 0h1m59 0h1m-398 1h1m21 0h2m49 0h2m188 0h2m50 0h1m22 0h1m-340 1h1m21 0h1m50 0h1m192 0h2m49 0h2m21 0h1m-401 1h1m58 0h1m21 0h1m49 0h2m195 0h2m49 0h1m21 0h1m58 0h1m-403 1h1m21 0h1m49 0h1m199 0h1m49 0h1m21 0h1m-346 1h1m21 0h1m48 0h2m201 0h2m48 0h1m21 0h1m-406 1h1m57 0h1m21 0h1m48 0h1m205 0h1m48 0h1m21 0h1m57 0h1m-386 1h1m47 0h2m207 0h2m47 0h1m-308 1h1m46 0h2m211 0h2m46 0h1m-331 1h1m20 0h1m46 0h1m215 0h1m46 0h1m20 0h1m-354 1h1m20 0h1m45 0h2m217 0h2m45 0h1m20 0h1m-413 1h1m56 0h1m20 0h1m45 0h1m221 0h1m45 0h1m20 0h1m56 0h1m-415 1h1m20 0h1m44 0h2m223 0h2m44 0h1m20 0h1m-339 1h1m44 0h1m227 0h1m44 0h1m-397 1h1m76 0h1m44 0h1m229 0h1m44 0h1m76 0h1m-419 1h1m19 0h1m43 0h2m231 0h2m43 0h1m19 0h1m-364 1h1m19 0h1m43 0h1m235 0h1m43 0h1m19 0h1m-422 1h1m55 0h1m19 0h1m43 0h1m237 0h1m43 0h1m19 0h1m55 0h1m-424 1h1m19 0h1m43 0h1m239 0h1m43 0h1m19 0h1m-370 1h1m19 0h1m42 0h2m241 0h1m43 0h1m19 0h1m-427 1h1m74 0h1m42 0h1m244 0h2m42 0h1m74 0h1m-409 1h1m42 0h1m247 0h1m42 0h1m-355 1h1m18 0h1m42 0h1m249 0h1m42 0h1m18 0h1m-431 1h1m54 0h1m61 0h1m251 0h1m61 0h1m54 0h1m-372 1h2m253 0h2m-299 1h1m40 0h1m257 0h1m40 0h1m-361 1h1m18 0h1m40 0h1m259 0h1m40 0h1m18 0h1m-382 1h1m18 0h1m40 0h1m261 0h1m40 0h1m18 0h1m-438 1h1m72 0h1m40 0h1m263 0h1m40 0h1m72 0h1m-380 1h1m265 0h1m-327 1h1m58 0h1m267 0h1m58 0h1m-369 1h1m39 0h1m269 0h1m39 0h1m-352 1h1m39 0h1m271 0h1m39 0h1m-372 1h1m57 0h1m273 0h1m57 0h1m-392 1h1m57 0h1m275 0h1m57 0h1m-375 1h1m38 0h1m277 0h1m38 0h1m-358 1h1m38 0h1m279 0h1m38 0h1m-378 1h1m56 0h1m281 0h1m56 0h1m-341 1h1m283 0h1m-324 1h1m37 0h1m285 0h1m37 0h1m-382 1h1m17 0h1m37 0h1m287 0h1m37 0h1m17 0h1m-402 1h1m17 0h1m37 0h1m289 0h1m37 0h1m17 0h1m-405 3h1m17 0h1m37 0h1m293 0h1m37 0h1m17 0h1m-390 1h1m37 0h1m295 0h1m37 0h1m-336 1h1m297 0h1m-300 1h1m299 0h1m-303 3h1m303 0h1m-360 1h1m53 0h1m305 0h1m53 0h1m-398 1h1m35 0h1m307 0h1m35 0h1m-383 3h1m35 0h1m311 0h1m35 0h1m-350 1h1m313 0h1m-369 2h1m16 0h1m387 0h1m16 0h1m-371 1h1m317 0h1m-321 3h1m321 0h1m-326 5h1m327 0h1m-331 3h1m331 0h1m-335 3h1m335 0h1m-335 197h1m331 0h1m-331 3h1m327 0h1m-326 5h1m321 0h1m-321 3h1m317 0h1m-354 1h1m387 0h1m-352 2h1m313 0h1m-350 1h1m35 0h1m311 0h1m35 0h1m-383 3h1m35 0h1m307 0h1m35 0h1m-398 1h1m53 0h1m305 0h1m53 0h1m-360 1h1m303 0h1m-304 1h1m301 0h1m-301 3h1m297 0h1m-336 1h1m37 0h1m295 0h1m37 0h1m-390 1h1m17 0h1m37 0h1m293 0h1m37 0h1m17 0h1m-388 1h1m367 0h1m-386 2h1m55 0h1m289 0h1m55 0h1m-402 1h1m17 0h1m37 0h1m287 0h1m37 0h1m17 0h1m-382 1h1m37 0h1m285 0h1m37 0h1m-324 1h1m283 0h1m-341 1h1m56 0h1m281 0h1m56 0h1m-378 1h1m38 0h1m279 0h1m38 0h1m-358 1h1m38 0h1m277 0h1m38 0h1m-375 1h1m57 0h1m275 0h1m57 0h1m-392 1h1m57 0h1m273 0h1m57 0h1m-372 1h1m39 0h1m271 0h1m39 0h1m-352 1h1m39 0h1m269 0h1m39 0h1m-369 1h1m18 0h1m39 0h1m267 0h1m39 0h1m18 0h1m-327 1h1m265 0h1m-380 1h1m113 0h1m263 0h1m113 0h1m-438 1h1m18 0h1m40 0h1m261 0h1m40 0h1m18 0h1m-382 1h1m18 0h1m40 0h1m259 0h1m40 0h1m18 0h1m-435 1h1m73 0h1m40 0h1m257 0h1m40 0h1m73 0h1m-414 1h1m40 0h2m253 0h2m40 0h1m-358 1h1m61 0h1m251 0h1m61 0h1m-376 1h1m61 0h1m249 0h1m61 0h1m-374 1h1m18 0h1m42 0h1m247 0h1m42 0h1m18 0h1m-428 1h1m74 0h1m42 0h1m244 0h2m42 0h1m74 0h1m-407 1h1m42 0h2m241 0h1m43 0h1m-350 1h1m19 0h1m43 0h1m239 0h1m43 0h1m19 0h1m-424 1h1m55 0h1m19 0h1m43 0h1m237 0h1m43 0h1m19 0h1m55 0h1m-422 1h1m19 0h1m43 0h1m235 0h1m43 0h1m19 0h1m-364 1h1m19 0h1m43 0h2m231 0h2m43 0h1m19 0h1m-419 1h1m76 0h1m44 0h1m229 0h1m44 0h1m76 0h1m-397 1h1m44 0h1m227 0h1m44 0h1m-339 1h1m20 0h1m44 0h2m223 0h2m44 0h1m20 0h1m-415 1h1m56 0h1m20 0h1m45 0h1m221 0h1m45 0h1m20 0h1m56 0h1m-413 1h1m20 0h1m45 0h2m217 0h2m45 0h1m20 0h1m-354 1h1m20 0h1m46 0h1m215 0h1m46 0h1m20 0h1m-410 1h1m57 0h1m20 0h1m46 0h2m211 0h2m46 0h1m20 0h1m57 0h1m-387 1h1m47 0h2m207 0h2m47 0h1m-306 1h1m48 0h1m205 0h1m48 0h1m-326 1h1m21 0h1m48 0h2m201 0h2m48 0h1m21 0h1m-346 1h1m21 0h1m49 0h1m199 0h1m49 0h1m21 0h1m-403 1h1m58 0h1m21 0h1m49 0h2m195 0h2m49 0h1m21 0h1m58 0h1m-460 1h1m58 0h1m21 0h1m50 0h1m192 0h2m49 0h2m21 0h1m58 0h1m-399 1h1m21 0h2m49 0h2m188 0h2m50 0h1m22 0h1m-338 1h1m22 0h1m50 0h2m184 0h2m51 0h1m22 0h1m-396 1h1m59 0h1m22 0h1m51 0h2m180 0h2m52 0h1m22 0h1m59 0h1m-454 1h1m59 0h1m22 0h1m52 0h2m176 0h2m53 0h1m22 0h1m59 0h1m-392 1h1m22 0h1m53 0h2m172 0h2m53 0h2m22 0h1m-330 1h1m22 0h2m53 0h2m168 0h2m54 0h1m22 0h2m-389 1h1m60 0h2m22 0h1m54 0h2m164 0h2m55 0h1m22 0h1m61 0h1m-448 1h1m61 0h1m22 0h1m55 0h2m160 0h2m56 0h1m22 0h1m61 0h1m-446 1h1m61 0h1m22 0h2m55 0h3m155 0h2m56 0h2m22 0h1m61 0h1m-444 1h1m61 0h1m23 0h1m57 0h2m151 0h2m57 0h1m23 0h1m61 0h1m-442 1h1m61 0h1m23 0h1m58 0h2m147 0h2m58 0h1m23 0h1m61 0h1m-440 1h1m61 0h2m22 0h2m58 0h3m141 0h3m58 0h2m22 0h2m61 0h1m-438 1h1m62 0h1m23 0h1m60 0h3m135 0h3m60 0h1m23 0h1m62 0h1m-436 1h1m62 0h1m23 0h1m62 0h3m129 0h3m62 0h1m23 0h1m62 0h1m-434 1h1m62 0h1m23 0h1m64 0h3m123 0h3m63 0h2m23 0h1m62 0h1m-369 1h1m23 0h2m65 0h3m117 0h3m65 0h1m24 0h1m-304 1h1m24 0h1m67 0h4m109 0h4m67 0h1m23 0h2m-366 1h1m63 0h2m23 0h1m70 0h3m103 0h3m70 0h1m23 0h1m64 0h1m-428 1h1m64 0h1m23 0h2m71 0h3m97 0h3m71 0h2m23 0h1m64 0h1m-361 1h1m24 0h2m72 0h3m91 0h3m72 0h2m24 0h1m-294 1h2m24 0h2m73 0h4m83 0h4m73 0h2m24 0h2m-358 1h1m66 0h1m25 0h1m76 0h5m73 0h5m76 0h1m25 0h1m66 0h1m-422 1h1m66 0h1m25 0h2m79 0h6m60 0h7m79 0h2m25 0h1m66 0h1m-420 1h1m66 0h2m25 0h1m84 0h7m47 0h6m85 0h1m25 0h2m66 0h1m-418 1h1m67 0h1m25 0h2m89 0h7m33 0h7m89 0h2m25 0h1m67 0h1m-416 1h1m67 0h2m25 0h1m95 0h33m95 0h1m25 0h2m67 0h1m-414 1h1m68 0h1m25 0h2m219 0h2m25 0h1m68 0h1m-412 1h1m68 0h1m26 0h2m215 0h2m26 0h1m68 0h1m-410 1h1m68 0h2m26 0h2m211 0h2m26 0h2m68 0h1m-408 1h1m69 0h1m27 0h2m207 0h2m27 0h1m69 0h1m-406 1h1m69 0h2m27 0h2m203 0h2m27 0h2m69 0h1m-404 1h1m70 0h1m28 0h2m199 0h2m28 0h1m70 0h1m-402 1h1m70 0h1m29 0h2m195 0h2m29 0h1m70 0h1m-400 1h1m70 0h2m29 0h2m191 0h2m29 0h2m70 0h1m-398 1h1m71 0h1m30 0h2m187 0h2m30 0h1m71 0h1m-396 1h1m71 0h2m30 0h2m183 0h2m30 0h2m71 0h1m-394 1h1m72 0h2m30 0h2m179 0h2m30 0h2m72 0h1m-392 1h1m73 0h2m30 0h2m175 0h2m30 0h2m73 0h1m-390 1h1m74 0h1m31 0h2m171 0h2m31 0h1m74 0h1m-388 1h1m74 0h2m31 0h3m164 0h4m31 0h2m74 0h1m-386 1h1m75 0h2m32 0h4m156 0h4m33 0h2m75 0h1m-384 1h1m76 0h2m34 0h4m149 0h3m35 0h2m76 0h1m-382 1h1m77 0h1m37 0h2m145 0h2m36 0h2m77 0h1m-380 1h1m77 0h2m37 0h2m141 0h2m36 0h2m77 0h2m-378 1h2m77 0h2m37 0h3m134 0h4m36 0h2m78 0h1m-374 1h1m78 0h2m38 0h4m126 0h4m38 0h2m79 0h1m-372 1h1m79 0h3m39 0h4m119 0h3m40 0h2m79 0h2m-370 1h2m80 0h2m41 0h4m111 0h4m41 0h2m80 0h1m-366 1h1m81 0h2m43 0h3m104 0h4m43 0h2m81 0h1m-364 1h1m82 0h2m44 0h4m96 0h4m44 0h3m82 0h1m-362 1h1m83 0h2m46 0h4m88 0h4m46 0h2m84 0h1m-360 1h1m84 0h2m48 0h4m80 0h4m48 0h2m85 0h1m-358 1h1m85 0h2m50 0h6m69 0h5m50 0h2m86 0h1m-356 1h1m86 0h3m53 0h7m54 0h8m53 0h2m87 0h1m-354 1h1m88 0h2m58 0h16m22 0h16m58 0h3m88 0h1m-352 1h1m89 0h3m71 0h22m72 0h2m90 0h1m-350 1h1m91 0h3m159 0h3m90 0h2m-348 1h2m92 0h4m151 0h4m92 0h1m-344 1h1m95 0h3m145 0h3m95 0h1m-342 1h1m97 0h2m140 0h3m96 0h2m-340 1h2m97 0h3m135 0h2m98 0h1m-336 1h1m99 0h4m127 0h4m99 0h1m-334 1h2m101 0h4m119 0h4m101 0h2m-331 1h1m104 0h4m110 0h5m103 0h2m-328 1h2m106 0h4m102 0h4m107 0h1m-324 1h2m108 0h6m90 0h6m109 0h2m-321 1h1m113 0h6m78 0h6m114 0h1m-318 1h2m117 0h4m70 0h4m118 0h2m-315 1h1m120 0h6m58 0h6m121 0h1m-312 1h2m124 0h17m24 0h17m125 0h2m-309 1h1m140 0h24m141 0h1m-306 1h2m301 0h2m-303 1h1m299 0h1m-300 1h2m295 0h2m-297 1h1m292 0h2m-294 1h2m289 0h1m-290 1h2m285 0h2m-287 1h1m283 0h1m-284 1h2m279 0h2m-281 1h2m275 0h2m-277 1h2m271 0h2m-273 1h2m267 0h2m-269 1h2m263 0h2m-265 1h2m259 0h2m-261 1h2m255 0h2m-257 1h2m251 0h2m-253 1h3m245 0h3m-248 1h2m241 0h2m-243 1h2m237 0h2m-239 1h2m233 0h2m-235 1h3m227 0h3m-230 1h2m223 0h2m-225 1h2m219 0h2m-221 1h2m215 0h2m-217 1h3m209 0h3m-212 1h2m205 0h2m-207 1h2m201 0h2m-203 1h2m197 0h2m-199 1h3m191 0h3m-194 1h3m184 0h4m-188 1h4m177 0h3m-180 1h3m171 0h3m-174 1h3m165 0h3m-168 1h3m159 0h3m-162 1h3m153 0h3m-156 1h3m146 0h4m-150 1h4m139 0h3m-142 1h4m131 0h4m-135 1h4m123 0h4m-127 1h5m113 0h5m-118 1h5m103 0h5m-108 1h7m88 0h8m-96 1h10m68 0h10m-78 1h10m48 0h10m-58 1h10m28 0h10m-38 1h28"/><path stroke="#fff" transform="translate(.5)" d="M0 0m15 285v28m1-38v10m0 28v10m1-58v10m0 48v10m1-78v10m0 68v10m1-95v7m0 88v8m1-108v5m0 103v5m1-118v5m0 113v5m1-127v4m0 123v4m1-135v4m0 131v4m1-143v4m0 139v3m1-149v3m0 146v4m1-156v3m0 153v3m1-162v3m0 159v3m1-168v3m0 165v3m1-174v3m0 171v3m1-181v4m0 177v3m1-187v3m0 184v4m1-194v3m0 191v3m1-199v2m0 197v2m1-203v2m0 201v2m1-207v2m0 205v2m1-212v3m0 209v3m1-217v2m0 215v2m1-221v2m0 219v2m1-225v2m0 223v2m1-230v3m0 227v3m1-235v2m0 233v2m1-239v2m0 237v2m1-243v2m0 241v2m1-248v3m0 245v3m1-253v2m0 251v2m1-257v2m0 255v2m1-261v2m0 259v2m1-265v2m0 263v2m1-269v2m0 267v2m1-273v2m0 271v2m1-277v2m0 275v2m1-281v2m0 279v2m2-286v2m0 285v2m1-291v2m1 290v2m1-297v2m0 295v2m2-302v2m0 301v2m1-165v24m1-167v2m0 124v17m0 24v17m0 125v2m1-191v6m0 58v6m1-193v2m0 117v4m0 70v4m0 118v2m1-204v6m0 78v6m1-206v2m0 108v6m0 90v6m0 109v2m1-325v2m0 106v4m0 102v4m1-114v4m0 110v5m0 103v2m1-331v2m0 101v4m0 119v4m0 101v2m1-234v4m0 127v4m1-237v2m0 97v3m0 135v2m1-142v2m0 140v3m0 96v2m1-246v3m0 145v3m1-249v2m0 92v4m0 151v4m1-162v3m0 159v3m0 90v2m1-260v3m0 71v22m0 72v2m1-172v2m0 58v16m0 22v16m0 58v3m1-178v3m0 53v7m0 54v8m0 53v2m1-182v2m0 50v6m0 69v5m0 50v2m1-186v2m0 48v4m0 80v4m0 48v2m1-190v2m0 46v4m0 88v4m0 46v2m1-194v2m0 44v4m0 96v4m0 44v3m1-199v2m0 43v3m0 104v4m0 43v2m1-285v2m0 80v2m0 41v4m0 111v4m0 41v2m1-208v3m0 39v4m0 119v3m0 40v2m0 79v2m1-293v2m0 38v4m0 126v4m0 38v2m1-295v2m0 77v2m0 37v3m0 134v4m0 36v2m1-220v2m0 37v2m0 141v2m0 36v2m0 77v2m1-264v2m0 145v2m0 36v2m1-227v2m0 34v4m0 149v3m0 35v2m1-231v2m0 32v4m0 156v4m0 33v2m1-235v2m0 31v3m0 164v4m0 31v2m1-206v2m0 171v2m1-209v2m0 30v2m0 175v2m0 30v2m1-245v2m0 30v2m0 179v2m0 30v2m1-249v2m0 30v2m0 183v2m0 30v2m1-221v2m0 187v2m1-224v2m0 29v2m0 191v2m0 29v2m1-228v2m0 195v2m1-201v2m0 199v2m1-234v2m0 27v2m0 203v2m0 27v2m1-238v2m0 207v2m1-241v2m0 26v2m0 211v2m0 26v2m1-245v2m0 215v2m1-221v2m0 219v2m1-251v2m0 121v33m0 121v2m1-254v2m0 89v7m0 33v7m0 89v2m1-257v2m0 110v7m0 47v6m0 111v2m1-260v2m0 79v6m0 60v7m0 79v2m1-159v5m0 73v5m1-188v2m0 24v2m0 73v4m0 83v4m0 73v2m0 24v2m1-269v2m0 72v3m0 91v3m0 72v2m1-247v2m0 71v3m0 97v3m0 71v2m1-275v2m0 94v3m0 103v3m1-113v4m0 109v4m0 91v2m1-280v2m0 65v3m0 117v3m1-126v3m0 123v3m0 63v2m1-197v3m0 129v3m1-138v3m0 135v3m1-228v2m0 22v2m0 58v3m0 141v3m0 58v2m0 22v2m1-233v2m0 147v2m1-153v2m0 151v2m1-215v2m0 55v3m0 155v2m0 56v2m1-220v2m0 160v2m1-245v2m0 77v2m0 164v2m1-225v2m0 53v2m0 168v2m0 77v2m1-253v2m0 172v2m0 53v2m1-233v2m0 176v2m1-182v2m0 180v2m1-186v2m0 184v2m1-241v2m0 49v2m0 188v2m1 0v2m0 49v2m1-248v2m0 195v2m2-202v2m0 201v2m2-208v2m0 207v2m1-213v2m0 211v2m2-218v2m0 217v2m2-224v2m0 223v2m3-231v2m0 231v2m4-240v2m1 242v2m4-252v2m0 253v2m292-257v2m0 253v2m4-7v2m1-246v2m4 3v2m0 231v2m3-231v2m0 223v2m2-224v2m0 217v2m2-218v2m0 211v2m1-213v2m0 207v2m2-208v2m0 201v2m2-202v2m0 195v2m1-4v2m0 49v2m1-296v2m0 49v2m0 188v2m1-190v2m0 184v2m1-186v2m0 180v2m1-182v2m0 176v2m1-178v2m0 172v2m0 53v2m1-284v2m0 53v2m0 168v2m0 77v2m1-328v2m0 77v2m0 164v2m1-166v2m0 160v2m1-219v2m0 55v3m0 155v2m0 56v2m1-215v2m0 151v2m1-153v2m0 147v2m1-233v2m0 22v2m0 58v3m0 141v3m0 58v2m0 22v2m1-228v3m0 135v3m1-138v3m0 129v3m1-132v3m0 123v3m0 63v2m1-258v2m0 65v3m0 117v3m1-120v4m0 109v4m0 91v2m1-302v2m0 94v3m0 103v3m1-179v2m0 71v3m0 97v3m0 71v2m1-247v2m0 72v3m0 91v3m0 72v2m1-269v2m0 24v2m0 73v4m0 83v4m0 73v2m0 24v2m1-188v5m0 73v5m1-159v2m0 79v6m0 60v7m0 79v2m1-260v2m0 110v7m0 47v6m0 111v2m1-257v2m0 89v7m0 33v7m0 89v2m1-254v2m0 121v33m0 121v2m1-251v2m0 219v2m1-221v2m0 215v2m1-245v2m0 26v2m0 211v2m0 26v2m1-241v2m0 207v2m1-238v2m0 27v2m0 203v2m0 27v2m1-234v2m0 199v2m1-201v2m0 195v2m1-228v2m0 29v2m0 191v2m0 29v2m1-224v2m0 187v2m1-221v2m0 30v2m0 183v2m0 30v2m1-249v2m0 30v2m0 179v2m0 30v2m1-245v2m0 30v2m0 175v2m0 30v2m1-209v2m0 171v2m1-206v2m0 31v3m0 164v4m0 31v2m1-235v2m0 32v4m0 156v4m0 33v2m1-231v2m0 34v4m0 149v3m0 35v2m1-189v2m0 145v2m0 36v2m1-224v2m0 37v2m0 141v2m0 36v2m0 77v2m1-378v2m0 77v2m0 37v3m0 134v4m0 36v2m1-216v2m0 38v4m0 126v4m0 38v2m1-212v3m0 39v4m0 119v3m0 40v2m0 79v2m1-370v2m0 80v2m0 41v4m0 111v4m0 41v2m1-203v2m0 43v3m0 104v4m0 43v2m1-199v2m0 44v4m0 96v4m0 44v3m1-195v2m0 46v4m0 88v4m0 46v2m1-190v2m0 48v4m0 80v4m0 48v2m1-186v2m0 50v6m0 69v5m0 50v2m1-182v3m0 53v7m0 54v8m0 53v2m1-177v2m0 58v16m0 22v16m0 58v3m1-173v3m0 71v22m0 72v2m1-167v3m0 159v3m0 90v2m1-348v2m0 92v4m0 151v4m1-155v3m0 145v3m1-148v2m0 140v3m0 96v2m1-340v2m0 97v3m0 135v2m1-137v4m0 127v4m1-234v2m0 101v4m0 119v4m0 101v2m1-226v4m0 110v5m0 103v2m1-328v2m0 106v4m0 102v4m1-216v2m0 108v6m0 90v6m0 109v2m1-207v6m0 78v6m1-203v2m0 117v4m0 70v4m0 118v2m1-194v6m0 58v6m1-190v2m0 124v17m0 24v17m0 125v2m1-168v24m1-164v2m0 301v2m2-302v2m0 295v2m1-4v2m1-294v2m1 0v2m0 285v2m2-286v2m0 279v2m1-281v2m0 275v2m1-277v2m0 271v2m1-273v2m0 267v2m1-269v2m0 263v2m1-265v2m0 259v2m1-261v2m0 255v2m1-257v2m0 251v2m1-253v3m0 245v3m1-248v2m0 241v2m1-243v2m0 237v2m1-239v2m0 233v2m1-235v3m0 227v3m1-230v2m0 223v2m1-225v2m0 219v2m1-221v2m0 215v2m1-217v3m0 209v3m1-212v2m0 205v2m1-207v2m0 201v2m1-203v2m0 197v2m1-199v3m0 191v3m1-194v3m0 184v4m1-188v4m0 177v3m1-180v3m0 171v3m1-174v3m0 165v3m1-168v3m0 159v3m1-162v3m0 153v3m1-156v3m0 146v4m1-150v4m0 139v3m1-142v4m0 131v4m1-135v4m0 123v4m1-127v5m0 113v5m1-118v5m0 103v5m1-108v7m0 88v8m1-96v10m0 68v10m1-78v10m0 48v10m1-58v10m0 28v10m1-38v28"/></g>
<g class="divisions"><title>Sign boundaries and house cusps</title><path stroke="#7f7f7f" transform="translate(0 .5)" d="M0 0m221 123h1m0 2h1m0 2h1m0 2h1m0 2h1m0 2h1m0 2h1m0 2h1m-1 2h1m0 2h1m0 2h1m182 0h1m-183 2h1m180 0h1m-181 2h1m177 0h1m-178 2h1m175 0h1m-176 2h1m172 0h1m-173 2h1m170 0h1m-171 2h1m167 0h1m-169 2h1m166 0h1m-167 2h1m163 0h1m-164 2h1m161 0h1m-162 2h1m158 0h1m-159 2h1m156 0h1m-157 2h1m153 0h1m-154 2h1m151 0h1m-152 2h1m149 0h1m-151 2h1m147 0h1m-148 2h1m145 0h1m-146 2h1m142 0h1m-143 2h1m140 0h1m-141 2h1m137 0h1m-138 2h1m135 0h1m-136 2h1m132 0h1m-133 2h1m130 0h1m-131 2h1m127 0h1m-129 2h1m126 0h1m-127 2h1m123 0h1m-240 1h1m1 1h1m113 0h1m121 0h1m-235 2h1m112 0h1m119 0h1m-232 1h1m1 1h1m109 0h1m116 0h1m-226 1h1m108 1h1m114 0h1m-223 1h1m1 1h1m105 0h1m111 0h1m-217 1h1m104 1h1m109 0h1m-214 1h1m1 1h1m100 0h1m107 0h1m-208 1h1m99 1h1m105 0h1m-205 1h1m1 1h1m96 0h1m102 0h1m-199 1h1m305 0h1m-305 1h1m93 0h1m100 0h1m106 0h1m-3 1h1m-299 1h1m92 0h1m97 0h1m104 0h1m-295 1h1m291 0h1m-291 1h1m89 0h1m95 0h1m101 0h1m-3 1h1m-285 1h1m88 0h1m92 0h1m99 0h1m-281 1h1m277 0h1m-277 1h1m85 0h1m90 0h1m96 0h1m-3 1h1m-271 1h1m84 0h1m88 0h1m93 0h1m-267 1h1m263 0h1m-263 1h1m80 0h1m86 0h1m91 0h1m-259 1h1m255 0h1m-177 1h1m84 0h1m88 0h1m-253 1h1m249 0h1m-249 1h1m76 0h1m81 0h1m86 0h1m-245 1h1m241 0h1m-167 1h1m79 0h1m83 0h1m-239 1h1m235 0h1m-235 1h1m72 0h1m76 0h1m81 0h1m-231 1h1m227 0h1m-227 1h1m69 0h1m74 0h1m78 0h1m-3 1h1m-221 1h1m68 0h1m71 0h1m76 0h1m-217 1h1m213 0h1m-213 1h1m65 0h1m69 0h1m73 0h1m-3 1h1m-207 1h1m63 0h1m67 0h1m71 0h1m-203 1h1m199 0h1m-199 1h1m60 0h1m65 0h1m68 0h1m-3 1h1m-193 1h1m59 0h1m62 0h1m66 0h1m-189 1h1m185 0h1m-185 1h1m56 0h1m60 0h1m63 0h1m-181 1h1m177 0h1m-123 1h1m58 0h1m60 0h1m-175 1h1m171 0h1m-171 1h1m52 0h1m55 0h1m58 0h1m-167 1h1m163 0h1m-113 1h1m53 0h1m55 0h1m-161 1h1m157 0h1m-157 1h1m48 0h1m50 0h1m53 0h1m-153 1h1m149 0h1m-104 1h1m49 0h1m50 0h1m-147 1h1m143 0h1m-143 1h1m43 0h1m46 0h1m48 0h1m-139 1h1m135 0h1m-135 1h1m40 0h1m44 0h1m45 0h1m-3 1h1m-129 1h1m39 0h1m41 0h1m43 0h1m-125 1h1m121 0h1m-121 1h1m36 0h1m39 0h1m40 0h1m-3 1h1m-115 1h1m35 0h1m36 0h1m38 0h1m-111 1h1m107 0h1m-107 1h1m32 0h1m34 0h1m35 0h1m-103 1h1m31 1h1m31 0h1m35 0h1m-99 1h1m95 0h1m-95 1h1m28 0h1m29 0h1m32 0h1m-91 1h1m87 0h1m-62 1h1m28 0h1m29 0h1m-85 1h1m81 0h1m-81 1h1m23 0h1m25 0h1m27 0h1m-77 1h1m73 0h1m-52 1h1m23 0h1m24 0h1m-71 1h1m67 0h1m-67 1h1m19 0h1m20 0h1m22 0h1m-63 1h1m59 0h1m-59 1h1m16 0h1m18 0h1m19 0h1m-3 1h1m-53 1h1m15 0h1m15 0h1m17 0h1m-49 1h1m45 0h1m-45 1h1m12 0h1m13 0h1m14 0h1m-3 1h1m-39 1h1m11 0h1m10 0h1m12 0h1m-35 1h1m31 0h1m-31 1h1m7 0h1m9 0h1m9 0h1m-3 1h1m-25 1h1m6 0h1m6 0h1m7 0h1m-21 1h1m17 0h1m-17 1h1m3 0h1m4 0h1m4 0h1m-13 1h1m9 0h1m-8 1h1m1 0h1m2 0h1m-7 1h1m3 0h1m-3 1h1m-3 1h1m3 0h1m-7 1h1m2 0h1m1 0h1m-8 1h1m9 0h1m-13 1h1m4 0h1m4 0h1m3 0h1m-17 1h1m17 0h1m-21 1h1m7 0h1m6 0h1m6 0h1m-25 1h1m-3 1h1m9 0h1m9 0h1m7 0h1m-31 1h1m31 0h1m-35 1h1m12 0h1m10 0h1m11 0h1m-39 1h1m-3 1h1m14 0h1m13 0h1m12 0h1m-45 1h1m45 0h1m-49 1h1m17 0h1m15 0h1m15 0h1m-53 1h1m-3 1h1m19 0h1m18 0h1m16 0h1m-59 1h1m59 0h1m-63 1h1m22 0h1m20 0h1m19 0h1m-67 1h1m67 0h1m-71 1h1m24 0h1m23 0h1m-52 1h1m73 0h1m-77 1h1m27 0h1m25 0h1m23 0h1m-81 1h1m81 0h1m-85 1h1m29 0h1m28 0h1m-62 1h1m87 0h1m-91 1h1m32 0h1m29 0h1m28 0h1m-95 1h1m95 0h1m-99 1h1m35 0h1m31 0h1m31 1h1m-103 1h1m35 0h1m34 0h1m32 0h1m-107 1h1m107 0h1m-111 1h1m38 0h1m36 0h1m35 0h1m-115 1h1m-3 1h1m40 0h1m39 0h1m36 0h1m-121 1h1m121 0h1m-125 1h1m43 0h1m41 0h1m39 0h1m-129 1h1m-3 1h1m45 0h1m44 0h1m40 0h1m-135 1h1m135 0h1m-139 1h1m48 0h1m46 0h1m43 0h1m-143 1h1m143 0h1m-147 1h1m50 0h1m49 0h1m-104 1h1m149 0h1m-153 1h1m53 0h1m50 0h1m48 0h1m-157 1h1m157 0h1m-161 1h1m55 0h1m53 0h1m-113 1h1m163 0h1m-167 1h1m58 0h1m55 0h1m52 0h1m-171 1h1m171 0h1m-175 1h1m60 0h1m58 0h1m-123 1h1m177 0h1m-181 1h1m63 0h1m60 0h1m56 0h1m-185 1h1m185 0h1m-189 1h1m66 0h1m62 0h1m59 0h1m-193 1h1m-3 1h1m68 0h1m65 0h1m60 0h1m-199 1h1m199 0h1m-203 1h1m71 0h1m67 0h1m63 0h1m-207 1h1m-3 1h1m73 0h1m69 0h1m65 0h1m-213 1h1m213 0h1m-217 1h1m76 0h1m71 0h1m68 0h1m-221 1h1m-3 1h1m78 0h1m74 0h1m69 0h1m-227 1h1m227 0h1m-231 1h1m81 0h1m76 0h1m72 0h1m-235 1h1m235 0h1m-239 1h1m83 0h1m79 0h1m-167 1h1m241 0h1m-245 1h1m86 0h1m81 0h1m76 0h1m-249 1h1m249 0h1m-253 1h1m88 0h1m84 0h1m-177 1h1m255 0h1m-259 1h1m91 0h1m86 0h1m80 0h1m-263 1h1m263 0h1m-267 1h1m93 0h1m88 0h1m84 0h1m-271 1h1m-3 1h1m96 0h1m90 0h1m85 0h1m-277 1h1m277 0h1m-281 1h1m99 0h1m92 0h1m88 0h1m-285 1h1m-3 1h1m101 0h1m95 0h1m89 0h1m-291 1h1m291 0h1m-295 1h1m104 0h1m97 0h1m92 0h1m-299 1h1m-3 1h1m106 0h1m100 0h1m93 0h1m-305 1h1m305 0h1m-199 1h1m102 0h1m96 0h1m1 1h1m-205 1h1m105 0h1m99 1h1m-208 1h1m107 0h1m100 0h1m1 1h1m-214 1h1m109 0h1m104 1h1m-217 1h1m111 0h1m105 0h1m1 1h1m-223 1h1m114 0h1m108 1h1m-226 1h1m116 0h1m109 0h1m1 1h1m-232 1h1m119 0h1m112 0h1m-235 2h1m121 0h1m113 0h1m1 1h1m-240 1h1m123 0h1m-127 2h1m126 0h1m-129 2h1m127 0h1m-131 2h1m130 0h1m-133 2h1m132 0h1m-136 2h1m135 0h1m-138 2h1m137 0h1m-141 2h1m140 0h1m-143 2h1m142 0h1m-146 2h1m145 0h1m-148 2h1m147 0h1m-151 2h1m149 0h1m-152 2h1m151 0h1m-154 2h1m153 0h1m-157 2h1m156 0h1m-159 2h1m158 0h1m-162 2h1m161 0h1m-164 2h1m163 0h1m-167 2h1m166 0h1m-169 2h1m167 0h1m-171 2h1m170 0h1m-173 2h1m172 0h1m-176 2h1m175 0h1m-178 2h1m177 0h1m-181 2h1m180 0h1m-183 2h1m182 0h1m0 2h1m0 2h1m-1 2h1m0 2h1m0 2h1m0 2h1m0 2h1m0 2h1m0 2h1m0 2h1"/><path stroke="#fff" transform="translate(0 .5)" d="M0 0m164 50h1m282 8h1m-279 1h1m274 4h1m-3 3h1m-269 2h1m264 3h1m-3 3h1m-258 5h1m253 0h1m-3 3h1m-4 5h1m-245 1h1m241 2h1m-4 5h1m5 23h1m-3 3h1m-3 3h1m-3 3h1m-3 3h1m-3 3h1m-3 3h1m-3 3h1m-3 3h1m-357 9h1m0 1h2m0 1h2m0 1h1m0 1h2m0 1h1m0 1h2m0 1h2m0 1h1m0 1h2m0 1h1m0 1h2m0 1h2m0 1h1m468 0h1m-469 1h2m464 0h2m-466 1h1m461 0h2m-463 1h2m457 0h2m-459 1h2m453 0h2m-455 1h1m451 0h1m-452 1h2m447 0h2m-449 1h1m444 0h2m-446 1h2m440 0h2m-442 1h2m436 0h2m-438 1h1m433 0h2m-3 1h1m-3 1h2m-416 1h1m411 0h2m-413 1h2m407 0h2m-409 1h1m404 0h2m-406 1h2m401 0h1m-402 1h1m398 0h2m-400 1h2m394 0h2m-396 1h1m391 0h2m-393 1h2m387 0h2m-389 1h1m385 0h1m-386 1h2m0 1h1m0 1h2m0 1h1m0 1h2m0 1h1m0 1h2m0 1h1m361 5h1m-3 1h2m-4 1h2m-4 1h2m-4 1h2m-4 1h2m-4 1h2m-4 1h2m-4 1h2m-4 1h2m-4 1h2m-4 1h2m-4 1h2m-3 1h1m-458 81h22m0 1h22m15 6h30m389 0h30m15 6h22m0 1h22m-458 81h1m-3 1h2m-4 1h2m-4 1h2m-4 1h2m-4 1h2m-4 1h2m-4 1h2m-4 1h2m-4 1h2m-4 1h2m-4 1h2m-4 1h2m-3 1h1m361 5h1m0 1h2m0 1h1m0 1h2m0 1h1m0 1h2m0 1h1m0 1h2m-386 1h1m385 0h1m-389 1h2m387 0h2m-393 1h2m391 0h1m-396 1h2m394 0h2m-400 1h2m398 0h1m-402 1h1m401 0h2m-406 1h2m404 0h1m-409 1h2m407 0h2m-413 1h2m411 0h1m-416 1h2m-4 1h2m-3 1h1m434 0h1m-438 1h2m436 0h2m-442 1h2m440 0h2m-446 1h2m444 0h1m-449 1h2m447 0h2m-452 1h1m451 0h1m-455 1h2m453 0h2m-459 1h2m457 0h2m-463 1h2m461 0h1m-466 1h2m464 0h2m-469 1h1m468 0h1m0 1h2m0 1h2m0 1h1m0 1h2m0 1h1m0 1h2m0 1h2m0 1h1m0 1h2m0 1h1m0 1h2m0 1h2m0 1h1m-357 9h1m-3 3h1m-3 3h1m-3 3h1m-3 3h1m-3 3h1m-3 3h1m-3 3h1m-3 3h1m5 23h1m-4 5h1m241 2h1m-245 1h1m-4 5h1m-3 3h1m253 0h1m-258 5h1m-3 3h1m263 1h1m-268 4h1m-3 3h1m274 4h1m-279 1h1m282 8h1"/><path stroke="#fff" transform="translate(.5)" d="M0 0m152 538v2m1-4v2m2-5v2m2-5v2m1-4v2m2-5v2m2-5v2m1-4v2m2-471v2m0 464v2m1-466v2m1 0v2m0 457v2m1-459v2m0 453v2m1-36v2m1-420v2m0 447v2m1-449v2m0 411v2m1-413v2m0 440v2m1-442v2m0 404v2m0 30v2m2-437v2m0 398v2m1-400v2m1 0v2m0 391v2m1-393v2m1 0v2m0 384v2m2-385v2m0 378v2m1-380v2m1 0v2m0 371v2m1-373v2m25 7v2m1 0v2m1 0v2m1 0v3m1 0v2m1 0v2m1 0v3m1 0v2m1 0v3m1 0v2m1 0v2m1 0v2m44 395v4m1-11v7m1-15v8m1-15v7m1-11v4m24 66v22m1-44v22m12-523v22m1-44v22m24 66v4m1-11v7m1-15v8m1-15v7m1-11v4m44 395v2m1 0v2m1 0v2m1 0v3m1 0v2m1 0v2m1 0v3m1 0v2m1 0v3m1 0v2m1 0v2m1 0v2m25 7v2m1-373v2m0 371v2m1 0v2m1-380v2m0 378v2m2-385v2m0 384v2m1 0v2m1-393v2m0 391v2m1 0v2m1-400v2m1 399v2m1-438v2m0 30v2m0 404v2m1-442v2m0 440v2m1-413v2m0 411v2m1-449v2m0 447v2m1-420v2m1-36v2m0 453v2m1-459v2m0 457v2m1 0v2m1-466v2m0 464v2m2-471v2m1-4v2m2-5v2m2-5v2m1-4v2m2-5v2m2-5v2m1-4v2"/></g>
<g class="sign-aries"><title>Aries</title><path stroke="#f00" transform="translate(0 .5)" d="M0 0m113 101h3m7 0h3m-14 1h1m3 0h1m5 0h1m3 0h1m-15 4h1m13 0h1m-14 1h1m11 0h1"/><path stroke="#f00" transform="translate(.5)" d="M0 0m111 103v3m6-3v3m1 0v4m1 0v8m1-12v4m1-7v3m6-3v3"/></g>
<g class="sign-taurus"><title>Taurus</title><path stroke="#ff0" transform="translate(0 .5)" d="M0 0m41 217h1m11 0h1m-11 3h2m5 0h2m-7 1h5m-7 1h2m5 0h2m-9 10h2m5 0h2m-7 1h5"/><path stroke="#ff0" transform="translate(.5)" d="M0 0m41 225v5m1-12v2m0 3v2m0 5v2m10-14v2m0 3v2m0 5v2m1-7v5"/></g>
<g class="sign-gemini"><title>Gemini</title><path stroke="#0f0" transform="translate(0 .5)" d="M0 0m38 352h1m13 0h1m-14 1h1m11 0h1m-12 1h2m1 0h5m1 0h2m-11 12h2m1 0h5m1 0h2m-12 1h1m11 0h1m-14 1h1m13 0h1"/><path stroke="#0f0" transform="translate(.5)" d="M0 0m42 354v13m6-13v13"/></g>
<g class="sign-cancer"><title>Cancer</title><path stroke="#00f" transform="translate(0 .5)" d="M0 0m107 472h5m-8 1h3m5 0h1m-10 1h1m9 0h3m-14 1h1m9 0h1m3 0h1m-16 1h1m1 2h3m-4 1h1m3 0h1m5 0h1m3 0h1m-4 1h3m1 2h1m-16 1h1m3 0h1m9 0h1m-14 1h3m9 0h1m-10 1h1m5 0h3m-8 1h5"/><path stroke="#00f" transform="translate(.5)" d="M0 0m101 480v3m6-3v3m4-7v3m6-3v3"/></g>
<g class="sign-leo"><title>Leo</title><path stroke="#f00" transform="translate(0 .5)" d="M0 0m223 543h5m-6 1h1m5 0h1m-8 1h1m7 0h1m-10 1h1m9 0h1m-11 6h1m9 0h1m-14 3h1m0 1h1m1 0h1m9 0h1m-12 1h1m11 0h1m0 1h1m0 1h1"/><path stroke="#f00" transform="translate(.5)" d="M0 0m219 547v5m2 1v3m8-3v3m2-9v5"/></g>
<g class="sign-virgo"><title>Virgo</title><path stroke="#ff0" transform="translate(0 .5)" d="M0 0m352 546h1m3 0h1m3 0h1m-8 1h1m1 0h1m1 0h1m1 0h1m1 0h1m3 2h1m-2 1h1m-2 1h1m-1 8h1m1 0h1m-2 1h1m-2 1h1m1 0h1m-4 1h1m3 0h1"/><path stroke="#ff0" transform="translate(.5)" d="M0 0m354 548v13m4-13v13m4-13v11m4-11v11"/></g>
<g class="sign-libra"><title>Libra</title><path stroke="#0f0" transform="translate(0 .5)" d="M0 0m477 485h5m-6 1h1m5 0h1m-12 5h7m3 0h7m-17 4h17"/><path stroke="#0f0" transform="translate(.5)" d="M0 0m475 487v3m1 0v1m6-1v1m1-4v3"/></g>
<g class="sign-scorpio"><title>Scorpio</title><path stroke="#00f" transform="translate(0 .5)" d="M0 0m543 365h1m3 0h1m3 0h1m-8 1h1m1 0h1m1 0h1m1 0h1m1 0h1m4 11h1m1 0h1m-6 3h1m2 0h1m-3 1h2"/><path stroke="#00f" transform="translate(.5)" d="M0 0m545 367v13m4-13v13m4-13v13m5-4v4"/></g>
<g class="sign-sagittarius"><title>Sagittarius</title><path stroke="#f00" transform="translate(0 .5)" d="M0 0m558 230h5m-2 1h1m-2 1h1m-2 1h1m-2 1h1m-2 1h1m-10 1h1m7 0h1m-8 1h1m5 0h1m-6 1h1m3 0h1m-4 1h1m1 0h1m-2 1h1m-2 1h1m1 0h1m-4 1h1m3 0h1m-6 1h1m5 0h1m-8 1h1m7 0h1m-10 1h1m-2 1h1"/><path stroke="#f00" transform="translate(.5)" d="M0 0m562 231v4"/></g>
<g class="sign-capricorn"><title>Capricorn</title><path stroke="#ff0" transform="translate(0 .5)" d="M0 0m493 111h3m-14 1h1m7 0h1m1 0h1m3 0h1m-16 1h1m9 0h1m-4 1h1m1 0h1m0 1h1m0 1h1m3 0h1m-4 1h3m-1 2h1m-12 1h1m1 0h1m9 0h1m-1 6h1m-2 1h1"/><path stroke="#ff0" transform="translate(.5)" d="M0 0m483 111v9m2 1v5m2-11v5m2-9v3m5 4v1m3-6v3m0 5v5"/></g>
<g class="sign-aquarius"><title>Aquarius</title><path stroke="#0f0" transform="translate(0 .5)" d="M0 0m381 39h1m-14 1h2m4 0h2m-9 2h1m5 0h1m5 0h1m-9 2h2m4 0h2m-14 1h1m15 4h1m-14 1h2m4 0h2m-9 2h1m5 0h1m5 0h1m-9 2h2m4 0h2m-14 1h1"/><path stroke="#0f0" transform="translate(.5)" d="M0 0m366 43v2m0 8v2m2-14v1m0 9v1m1-13v1m0 9v1m1-9v3m0 7v3m1-9v1m0 9v1m1-13v1m0 9v1m2-13v1m0 9v1m1-13v1m0 9v1m1-9v3m0 7v3m1-9v1m0 9v1m1-13v1m0 9v1m2-14v2m0 8v2"/></g>
<g class="sign-pisces"><title>Pisces</title><path stroke="#00f" transform="translate(0 .5)" d="M0 0m230 36h1m15 0h1m-16 1h1m13 0h1m-14 1h1m11 0h1m-12 1h1m9 0h1m-14 5h17m-14 5h1m9 0h1m-12 1h1m11 0h1m-14 1h1m13 0h1m-16 1h1m15 0h1"/><path stroke="#00f" transform="translate(.5)" d="M0 0m234 40v4m0 1v4m8-9v4m0 1v4"/></g>
<g class="house-1"><title>House 1</title><path stroke="#f00" transform="translate(0 .5)" d="M0 0m94 345h1m-2 1h1m-1 6h2m1 0h2"/><path stroke="#f00" transform="translate(.5)" d="M0 0m95 344v9"/></g>
<g class="house-2"><title>House 2</title><path stroke="#ff0" transform="translate(0 .5)" d="M0 0m138 431h3m-4 1h1m2 3h1m-2 1h1m-2 1h1m-2 2h5"/><path stroke="#ff0" transform="translate(.5)" d="M0 0m137 438v1m4-7v3"/></g>
<g class="house-3"><title>House 3</title><path stroke="#0f0" transform="translate(0 .5)" d="M0 0m218 489h3m-4 1h1m1 3h2m-4 3h1m0 1h3"/><path stroke="#0f0" transform="translate(.5)" d="M0 0m221 490v3m0 1v3"/></g>
<g class="house-4"><title>House 4</title><path stroke="#00f" transform="translate(0 .5)" d="M0 0m324 507h3m1 0h1"/><path stroke="#00f" transform="translate(.5)" d="M0 0m324 503v4m3-4v9"/></g>
<g class="house-5"><title>House 5</title><path stroke="#f00" transform="translate(0 .5)" d="M0 0m433 455h5m-5 3h4m-4 4h1m0 1h3"/><path stroke="#f00" transform="translate(.5)" d="M0 0m433 456v2m4 1v4"/></g>
<g class="house-6"><title>House 6</title><path stroke="#ff0" transform="translate(0 .5)" d="M0 0m499 354h3m0 1h1m-4 3h3m-3 4h3"/><path stroke="#ff0" transform="translate(.5)" d="M0 0m498 355v7m4-3v3"/></g>
<g class="house-7"><title>House 7</title><path stroke="#0f0" transform="translate(0 .5)" d="M0 0m501 246h5m-2 3h1m-2 1h1m-2 1h1"/><path stroke="#0f0" transform="translate(.5)" d="M0 0m501 252v3m4-8v2"/></g>
<g class="house-8"><title>House 8</title><path stroke="#00f" transform="translate(0 .5)" d="M0 0m458 159h3m-3 4h3m-3 4h3"/><path stroke="#00f" transform="translate(.5)" d="M0 0m457 160v3m0 1v3m4-7v3m0 1v3"/></g>
<g class="house-9"><title>House 9</title><path stroke="#f00" transform="translate(0 .5)" d="M0 0m378 101h3m-3 4h3m-4 3h1m0 1h3"/><path stroke="#f00" transform="translate(.5)" d="M0 0m377 102v3m4-3v7"/></g>
<g class="house-10"><title>House 10</title><path stroke="#ff0" transform="translate(0 .5)" d="M0 0m275 87h3m-11 1h1m-2 1h1m-1 6h2m1 0h2m4 0h3"/><path stroke="#ff0" transform="translate(.5)" d="M0 0m268 87v9m6-8v7m4-7v7"/></g>
<g class="house-11"><title>House 11</title><path stroke="#0f0" transform="translate(0 .5)" d="M0 0m158 136h1m7 0h1m-10 1h1m7 0h1m-9 6h2m1 0h2m3 0h2m1 0h2"/><path stroke="#0f0" transform="translate(.5)" d="M0 0m159 135v9m8-9v9"/></g>
<g class="house-12"><title>House 12</title><path stroke="#00f" transform="translate(0 .5)" d="M0 0m101 236h3m-11 1h1m6 0h1m-9 1h1m10 2h1m-2 1h1m-2 1h1m-10 2h2m1 0h2m3 0h5"/><path stroke="#00f" transform="translate(.5)" d="M0 0m94 236v9m6-2v1m4-7v3"/></g>
<g class="planet-mc"><title>MC</title><path stroke="#ff0" transform="translate(0 .5)" d="M0 0m339 115h4m-15 1h1m5 0h1m-6 1h1m3 0h1m-4 1h1m1 0h1m6 13h4m-14 21h1"/><path stroke="#ff0" transform="translate(.5)" d="M0 0m327 115v17m4-13v13m4-17v17m3-16v15m5-15v2m0 11v2"/><path stroke="#fff" transform="translate(.5)" d="M0 0m330 144v3m1-9v6m1-9v3"/></g>
<g class="planet-asc"><title>Asc</title><path stroke="#f00" transform="translate(0 .5)" d="M0 0m113 297h1m-2 1h1m1 0h1m4 5h2m4 0h2m-6 1h1m5 0h1m21 0h1m-38 1h3m4 3h2m-3 4h1m8 0h1m-9 1h2m4 0h2"/><path stroke="#f00" transform="translate(.5)" d="M0 0m111 299v15m4-15v15m3-10v4m3 1v4m3-9v9"/><path stroke="#fff" transform="translate(0 .5)" d="M0 0m131 304h13"/></g>
<g class="planet-node"><title>Node</title><path stroke="#007f7f" transform="translate(0 .5)" d="M0 0m213 132h5m-6 1h1m5 0h1m-8 1h1m7 0h1m-10 1h1m9 0h1m-11 6h1m9 0h1m-12 3h2m9 0h2m-14 1h1m13 0h1m-16 1h1m15 0h1m-16 1h1m1 0h1m9 0h1m1 0h1m-14 1h1m11 0h1m7 19h1"/><path stroke="#007f7f" transform="translate(.5)" d="M0 0m209 136v5m2 1v5m8-5v5m2-11v5"/><path stroke="#7f7f7f" transform="translate(0 .5)" d="M0 0m221 151h1"/><path stroke="#7f7f7f" transform="translate(.5)" d="M0 0m222 152v2m1 0v2m1 0v2m1 0v2m1 0v2"/></g>
<g class="planet-pluto"><title>Pluto</title><path stroke="#00f" transform="translate(0 .5)" d="M0 0m354 438h1m3 22h3m-3 4h3m-6 3h2m5 0h2m-7 1h2m1 0h2m-7 4h9"/><path stroke="#00f" transform="translate(.5)" d="M0 0m353 460v5m1 0v2m3-6v3m2 4v4m0 1v4m2-16v3m3 1v2m1-7v5"/><path stroke="#7f7f7f" transform="translate(.5)" d="M0 0m355 451v7m1-14v7"/></g>
<g class="planet-neptune"><title>Neptune</title><path stroke="#00f" transform="translate(0 .5)" d="M0 0m471 303h1m1 0h1m2 0h2m1 0h2m2 0h1m1 0h1m-38 4h1m25 1h2m5 0h2m-7 1h2m1 0h2m-7 4h4m1 0h4"/><path stroke="#00f" transform="translate(.5)" d="M0 0m472 301v5m1 0v2m5-7v17m5-12v2m1-7v5"/><path stroke="#7f7f7f" transform="translate(0 .5)" d="M0 0m454 307h6m0 1h7"/></g>
<g class="planet-uranus"><title>Uranus</title><path stroke="#0f0" transform="translate(0 .5)" d="M0 0m373 429h1m13 15h1m11 0h1m-12 1h1m9 0h1m-10 5h9m-10 3h1m9 0h1m-12 1h1m11 0h1m-8 2h1m1 0h1m-3 4h3"/><path stroke="#0f0" transform="translate(.5)" d="M0 0m389 446v4m0 1v2m2 4v3m2-12v2m0 1v6m2 0v3m2-14v4m0 1v2"/><path stroke="#7f7f7f" transform="translate(0 .5)" d="M0 0m376 434h1m0 1h2m0 1h1m0 1h1m0 1h2m0 1h1m0 1h1m0 1h2m0 1h1"/></g>
<g class="planet-saturn"><title>Saturn</title><path stroke="#ff0" transform="translate(0 .5)" d="M0 0m140 199h4m1 0h4m-1 4h3m-4 1h1m3 0h1m-7 1h2m4 3h1m-1 4h1m0 1h1m22 2h1"/><path stroke="#ff0" transform="translate(.5)" d="M0 0m144 197v15m6-3v3m2-7v3"/><path stroke="#fff" transform="translate(0 .5)" d="M0 0m156 212h15"/></g>
<g class="planet-jupiter"><title>Jupiter</title><path stroke="#7f7f7f" transform="translate(.5)" d="M0 0m370 437v7m1 0v7"/><path stroke="#f00" transform="translate(0 .5)" d="M0 0m368 432h1m14 21h1m-2 1h1m-11 1h2m0 1h1m-4 11h15"/><path stroke="#f00" transform="translate(.5)" d="M0 0m371 466v1m1-3v2m1-4v2m1-4v2m1-5v3m6-5v12m0 1v2"/></g>
<g class="planet-mars"><title>Mars</title><path stroke="#f00" transform="translate(0 .5)" d="M0 0m477 250h6m-2 1h1m-2 1h1m-2 1h1m-2 1h1m-2 1h1m-9 1h5m2 0h1m-9 1h1m5 0h2m-9 1h1m-1 6h1m7 0h1m-31 1h1m22 0h1m5 0h1m-6 1h5"/><path stroke="#f00" transform="translate(.5)" d="M0 0m466 259v5m9-6v1m1 0v5m6-13v5"/><path stroke="#fff" transform="translate(0 .5)" d="M0 0m461 261h2m-6 1h4m-8 1h4m-6 1h2"/></g>
<g class="planet-venus"><title>Venus</title><path stroke="#0f0" transform="translate(0 .5)" d="M0 0m181 154h5m-6 1h1m5 0h1m-7 6h1m5 0h1m-6 1h2m1 0h2m-7 4h9m2 31h1"/><path stroke="#0f0" transform="translate(.5)" d="M0 0m179 156v5m4 1v4m0 1v4m4-15v5"/><path stroke="#7f7f7f" transform="translate(.5)" d="M0 0m185 191v3m1-7v4m1-8v4m1-8v4m1-8v4m1-7v3"/></g>
<g class="planet-mercury"><title>Mercury</title><path stroke="#0f0" transform="translate(0 .5)" d="M0 0m152 182h1m7 0h1m-8 1h1m5 0h1m-6 1h5m-6 1h1m5 0h1m-7 6h1m5 0h1m-6 1h2m1 0h2m-7 4h9m28 2h1"/><path stroke="#0f0" transform="translate(.5)" d="M0 0m152 186v5m4 1v4m0 1v2m4-13v5"/><path stroke="#fff" transform="translate(0 .5)" d="M0 0m181 194h4m-10 1h6m-12 1h6m-9 1h3"/></g>
<g class="planet-moon"><title>Moon</title><path stroke="#00f" transform="translate(0 .5)" d="M0 0m433 176h5m-6 1h1m5 0h2m-9 1h1m8 0h1m-9 1h1m8 0h1m-9 1h1m-1 8h1m-2 1h1m8 0h1m-11 1h1m8 0h1m-9 1h1m5 0h2m-7 1h5m-24 11h1"/><path stroke="#00f" transform="translate(.5)" d="M0 0m434 181v2m0 3v2m1-5v3m7-6v2m0 5v2m1-7v5"/><path stroke="#fff" transform="translate(0 .5)" d="M0 0m427 192h1m-2 1h1m-3 1h2m-3 1h1m-2 1h1m-3 1h2m-3 1h1m-2 1h1"/></g>
<g class="planet-sun"><title>Sun</title><path stroke="#f00" transform="translate(0 .5)" d="M0 0m167 167h5m-7 1h2m5 0h2m-10 1h1m9 0h1m-12 1h1m11 0h1m-7 5h1m-7 5h1m11 0h1m-12 1h1m9 0h1m-10 1h2m5 0h2m-7 1h5m17 15h1"/><path stroke="#f00" transform="translate(.5)" d="M0 0m161 173v5m1-7v2m0 5v2m14-9v2m0 5v2m1-7v5"/><path stroke="#fff" transform="translate(0 .5)" d="M0 0m178 184h1m2 5h1m2 5h1"/><path stroke="#fff" transform="translate(.5)" d="M0 0m179 185v2m1 0v2m2 1v2m1 0v2"/></g>
<g class="aspect"><title>Uranus trine Asc</title><path stroke="#0f0" transform="translate(0 .5)" d="M0 0m156 305h1m1 1h1m1 1h1m1 1h1m1 1h1m1 1h1m1 1h1m1 1h1m1 1h1m1 2h1m1 1h1m1 1h1m1 1h1m1 1h1m1 1h1m1 1h1m1 1h1m1 2h1m1 1h1m1 1h1m1 1h1m1 1h1m1 1h1m1 1h1m1 1h1m1 1h1m1 2h1m1 1h1m1 1h1m1 1h1m1 1h1m1 1h1m1 1h1m1 1h1m1 2h1m1 1h1m1 1h1m1 1h1m1 1h1m1 1h1m1 1h1m1 1h1m1 1h1m1 2h1m1 1h1m1 1h1m1 1h1m1 1h1m1 1h1m1 1h1m1 1h1m1 1h1m1 2h1m1 1h1m1 1h1m1 1h1m1 1h1m1 1h1m1 1h1m1 1h1m1 2h1m1 1h1m1 1h1m1 1h1m1 1h1m1 1h1m1 1h1m1 1h1m1 1h1m1 2h1m1 1h1m1 1h1m1 1h1m1 1h1m1 1h1m1 1h1m1 1h1m1 2h1m1 1h1m1 1h1m1 1h1m1 1h1m1 1h1m1 1h1m1 1h1m1 1h1m1 2h1m1 1h1m1 1h1m1 1h1m1 1h1m1 1h1m1 1h1m1 1h1m1 1h1m1 2h1m1 1h1m1 1h1m1 1h1m1 1h1m1 1h1m1 1h1m1 1h1m1 2h1m1 1h1m1 1h1m1 1h1m1 1h1"/></g>
<g class="aspect"><title>Jupiter trine Asc</title><path stroke="#0f0" transform="translate(0 .5)" d="M0 0m155 304h1m2 2h1m2 2h1m2 1h1m2 2h1m2 2h1m2 2h1m2 1h1m2 2h1m2 2h1m2 2h1m2 1h1m2 2h1m2 2h1m2 2h1m2 1h1m2 2h1m2 2h1m2 2h1m2 1h1m2 2h1m2 2h1m2 2h1m2 1h1m2 2h1m2 2h1m2 2h1m2 1h1m2 2h1m2 2h1m2 2h1m2 1h1m2 2h1m2 2h1m2 2h1m2 2h1m2 1h1m2 2h1m2 2h1m2 2h1m2 1h1m2 2h1m2 2h1m2 2h1m2 1h1m2 2h1m2 2h1m2 2h1m2 1h1m2 2h1m2 2h1m2 2h1m2 1h1m2 2h1m2 2h1m2 2h1m2 1h1m2 2h1m2 2h1m2 2h1m2 1h1m2 2h1m2 2h1m2 2h1m2 1h1m2 2h1m2 2h1m2 2h1m2 1h1m2 2h1m2 2h1"/></g>
<g class="aspect"><title>Neptune trine Node</title><path stroke="#0f0" transform="translate(0 .5)" d="M0 0m232 172h1m0 1h2m0 1h1m0 1h2m0 1h1m0 1h2m0 1h2m0 1h1m0 1h2m0 1h1m0 1h2m0 1h1m0 1h2m0 1h1m0 1h2m0 1h2m0 1h1m0 1h2m0 1h1m0 1h2m0 1h1m0 1h2m0 1h1m0 1h2m0 1h2m0 1h1m0 1h2m0 1h1m0 1h2m0 1h1m0 1h2m0 1h1m0 1h2m0 1h2m0 1h1m0 1h2m0 1h1m0 1h2m0 1h1m0 1h2m0 1h1m0 1h2m0 1h2m0 1h1m0 1h2m0 1h1m0 1h2m0 1h1m0 1h2m0 1h1m0 1h2m0 1h2m0 1h1m0 1h2m0 1h1m0 1h2m0 1h1m0 1h2m0 1h1m0 1h2m0 1h2m0 1h1m0 1h2m0 1h1m0 1h2m0 1h1m0 1h2m0 1h1m0 1h2m0 1h2m0 1h1m0 1h2m0 1h1m0 1h2m0 1h1m0 1h2m0 1h1m0 1h2m0 1h2m0 1h1m0 1h2m0 1h1m0 1h2m0 1h1m0 1h2m0 1h1m0 1h2m0 1h2m0 1h1m0 1h2m0 1h1m0 1h2m0 1h1m0 1h2m0 1h1m0 1h2m0 1h2m0 1h1m0 1h2m0 1h1m0 1h2m0 1h1m0 1h2m0 1h1m0 1h2m0 1h2m0 1h1m0 1h2m0 1h1m0 1h2m0 1h1m0 1h2m0 1h1m0 1h2m0 1h2m0 1h1m0 1h2m0 1h1m0 1h2m0 1h1m0 1h2m0 1h1m0 1h2m0 1h2m0 1h1m0 1h2m0 1h1m0 1h2m0 1h1m0 1h2m0 1h1m0 1h2m0 1h2m0 1h1m0 1h2m0 1h1"/></g>
<g class="aspect"><title>Neptune sextile Pluto</title><path stroke="#0ff" transform="translate(0 .5)" d="M0 0m442 307h1m-3 3h1m-3 3h1m-3 3h1m-4 3h1m-3 3h1m-3 3h1m-3 3h1m-3 3h1m-3 3h1m-3 3h1m-4 3h1m-3 3h1m-3 3h1m-3 3h1m-3 3h1m-3 3h1m-3 3h1m-4 3h1m-3 3h1m-3 3h1m-3 3h1m-3 3h1m-3 3h1m-3 3h1m-4 3h1m-3 3h1m-3 3h1m-3 3h1m-3 3h1m-3 3h1m-3 3h1m-4 3h1m-3 3h1m-3 3h1m-3 3h1m-3 3h1m-3 3h1m-3 3h1m-4 3h1m-3 3h1m-3 3h1m-3 3h1"/></g>
<g class="aspect"><title>Jupiter conjunct Pluto</title><path stroke="#ff0" transform="translate(0 .5)" d="M0 0m365 427h1m-4 1h1m-4 2h1m-4 1h1m-4 2h1"/></g>
<g class="aspect"><title>Uranus sextile Neptune</title><path stroke="#0ff" transform="translate(0 .5)" d="M0 0m441 308h1m-2 2h1m-2 2h1m-2 2h1m-3 2h1m-2 2h1m-2 2h1m-2 2h1m-2 2h1m-3 2h1m-2 2h1m-2 2h1m-2 2h1m-3 2h1m-2 2h1m-2 2h1m-2 2h1m-3 2h1m-2 2h1m-2 2h1m-2 2h1m-2 2h1m-3 2h1m-2 2h1m-2 2h1m-2 2h1m-3 2h1m-2 2h1m-2 2h1m-2 2h1m-3 2h1m-2 2h1m-2 2h1m-2 2h1m-2 2h1m-3 2h1m-2 2h1m-2 2h1m-2 2h1m-3 2h1m-2 2h1m-2 2h1m-2 2h1m-3 2h1m-2 2h1m-2 2h1m-2 2h1m-2 2h1m-3 2h1m-2 2h1m-2 2h1m-2 2h1m-3 2h1m-2 2h1m-2 2h1m-2 2h1m-3 2h1m-2 2h1m-2 2h1"/></g>
<g class="aspect"><title>Jupiter sextile Neptune</title><path stroke="#0ff" transform="translate(0 .5)" d="M0 0m442 307h1m-3 3h1m-4 5h1m-3 3h1m-3 3h1m-3 3h1m-4 5h1m-3 3h1m-3 3h1m-3 3h1m-4 5h1m-3 3h1m-3 3h1m-3 3h1m-4 5h1m-3 3h1m-3 3h1m-3 3h1m-4 5h1m-3 3h1m-3 3h1m-4 5h1m-3 3h1m-3 3h1m-3 3h1m-4 5h1m-3 3h1m-3 3h1m-3 3h1m-4 5h1m-3 3h1m-3 3h1m-3 3h1m-4 5h1m-3 3h1"/><path stroke="#0ff" transform="translate(.5)" d="M0 0m366 425v2m2-5v2m1-4v2m2-5v2m2-5v2m2-5v2m2-5v2m1-4v2m2-5v2m2-5v2m2-5v2m2-5v2m1-4v2m2-5v2m2-5v2m2-5v2m2-5v2m1-4v2m2-5v2m2-5v2m2-5v2m1-4v2m2-5v2m2-5v2m2-5v2m2-5v2m1-4v2m2-5v2m2-5v2m2-5v2m2-5v2m1-4v2m2-5v2m2-5v2m2-5v2m2-5v2m1-4v2m2-5v2m2-5v2m2-5v2m2-5v2m1-4v2m2-5v2"/></g>
<g class="aspect"><title>Jupiter conjunct Uranus</title><path stroke="#ff0" transform="translate(0 .5)" d="M0 0m369 425h1m-3 1h1m-3 1h1"/></g>
<g class="aspect"><title>Venus trine Mars</title><path stroke="#0f0" transform="translate(0 .5)" d="M0 0m194 201h1m1 1h1m1 0h1m1 1h1m1 0h1m1 1h1m1 0h1m1 1h1m1 0h1m1 1h1m1 0h1m1 1h1m1 0h1m1 1h1m1 0h1m1 1h1m1 0h1m1 1h1m1 1h1m1 0h1m1 1h1m1 0h1m1 1h1m1 0h1m1 1h1m1 0h1m1 1h1m1 0h1m1 1h1m1 0h1m1 1h1m1 0h1m1 1h1m1 1h1m1 0h1m1 1h1m1 0h1m1 1h1m1 0h1m1 1h1m1 0h1m1 1h1m1 0h1m1 1h1m1 0h1m1 1h1m1 0h1m1 1h1m1 0h1m1 1h1m1 1h1m1 0h1m1 1h1m1 0h1m1 1h1m1 0h1m1 1h1m1 0h1m1 1h1m1 0h1m1 1h1m1 0h1m1 1h1m1 0h1m1 1h1m1 0h1m1 1h1m1 1h1m1 0h1m1 1h1m1 0h1m1 1h1m1 0h1m1 1h1m1 0h1m1 1h1m1 0h1m1 1h1m1 0h1m1 1h1m1 0h1m1 1h1m1 1h1m1 0h1m1 1h1m1 0h1m1 1h1m1 0h1m1 1h1m1 0h1m1 1h1m1 0h1m1 1h1m1 0h1m1 1h1m1 0h1m1 1h1m1 0h1m1 1h1m1 1h1m1 0h1m1 1h1m1 0h1m1 1h1m1 0h1m1 1h1m1 0h1m1 1h1m1 0h1m1 1h1m1 0h1m1 1h1m1 0h1m1 1h1m1 0h1m1 1h1m1 1h1m1 0h1m1 1h1m1 0h1m1 1h1m1 0h1m1 1h1"/></g>
<g class="aspect"><title>Mercury trine Mars</title><path stroke="#0f0" transform="translate(0 .5)" d="M0 0m193 202h1m2 1h1m2 1h1m2 0h1m2 1h1m2 1h1m2 1h1m2 0h1m2 1h1m2 1h1m2 1h1m2 1h1m2 0h1m2 1h1m2 1h1m2 1h1m2 0h1m2 1h1m2 1h1m2 1h1m2 1h1m2 0h1m2 1h1m2 1h1m2 1h1m2 1h1m2 0h1m2 1h1m2 1h1m2 1h1m2 0h1m2 1h1m2 1h1m2 1h1m2 1h1m2 0h1m2 1h1m2 1h1m2 1h1m2 0h1m2 1h1m2 1h1m2 1h1m2 1h1m2 0h1m2 1h1m2 1h1m2 1h1m2 0h1m2 1h1m2 1h1m2 1h1m2 1h1m2 0h1m2 1h1m2 1h1m2 1h1m2 0h1m2 1h1m2 1h1m2 1h1m2 1h1m2 0h1m2 1h1m2 1h1m2 1h1m2 1h1m2 0h1m2 1h1m2 1h1m2 1h1m2 0h1m2 1h1m2 1h1m2 1h1m2 1h1m2 0h1m2 1h1m2 1h1m2 1h1m2 0h1m2 1h1m2 1h1"/></g>
<g class="aspect"><title>Sun trine Mars</title><path stroke="#0f0" transform="translate(0 .5)" d="M0 0m193 202h1m2 1h1m2 1h1m2 0h1m2 1h1m2 1h1m2 1h1m2 0h1m2 1h1m2 1h1m2 1h1m2 1h1m2 0h1m2 1h1m2 1h1m2 1h1m2 0h1m2 1h1m2 1h1m2 1h1m2 1h1m2 0h1m2 1h1m2 1h1m2 1h1m2 1h1m2 0h1m2 1h1m2 1h1m2 1h1m2 0h1m2 1h1m2 1h1m2 1h1m2 1h1m2 0h1m2 1h1m2 1h1m2 1h1m2 0h1m2 1h1m2 1h1m2 1h1m2 1h1m2 0h1m2 1h1m2 1h1m2 1h1m2 0h1m2 1h1m2 1h1m2 1h1m2 1h1m2 0h1m2 1h1m2 1h1m2 1h1m2 0h1m2 1h1m2 1h1m2 1h1m2 1h1m2 0h1m2 1h1m2 1h1m2 1h1m2 1h1m2 0h1m2 1h1m2 1h1m2 1h1m2 0h1m2 1h1m2 1h1m2 1h1m2 1h1m2 0h1m2 1h1m2 1h1m2 1h1m2 0h1m2 1h1m2 1h1"/></g>
<g class="aspect"><title>Mercury conjunct Venus</title><path stroke="#ff0" transform="translate(0 .5)" d="M0 0m194 201h1m-2 1h1"/></g>
<g class="aspect"><title>Moon square Venus</title><path stroke="#f00" transform="translate(0 .5)" d="M0 0m197 201h1m3 0h1m3 0h1m3 0h1m3 1h1m3 0h1m3 0h1m3 0h1m3 0h1m3 0h1m3 0h1m3 0h1m3 0h1m3 1h1m3 0h1m3 0h1m3 0h1m3 0h1m3 0h1m3 0h1m3 0h1m3 0h1m3 1h1m3 0h1m3 0h1m3 0h1m3 0h1m3 0h1m3 0h1m3 0h1m3 0h1m3 1h1m3 0h1m3 0h1m3 0h1m3 0h1m3 0h1m3 0h1m3 0h1m3 0h1m3 1h1m3 0h1m3 0h1m3 0h1m3 0h1m3 0h1m3 0h1m3 0h1m3 0h1m3 1h1m3 0h1m3 0h1m3 0h1m3 0h1"/></g>
<g class="aspect"><title>Sun conjunct Venus</title><path stroke="#ff0" transform="translate(0 .5)" d="M0 0m194 201h1m-2 1h1"/></g>
<g class="aspect"><title>Moon square Mercury</title><path stroke="#f00" transform="translate(0 .5)" d="M0 0m193 202h1m3 0h1m3 0h1m3 0h1m3 0h1m3 0h1m3 1h1m3 0h1m3 0h1m3 0h1m3 0h1m3 0h1m3 0h1m3 0h1m3 0h1m3 0h1m3 0h1m3 1h1m3 0h1m3 0h1m3 0h1m3 0h1m3 0h1m3 0h1m3 0h1m3 0h1m3 0h1m3 1h1m3 0h1m3 0h1m3 0h1m3 0h1m3 0h1m3 0h1m3 0h1m3 0h1m3 0h1m3 0h1m3 1h1m3 0h1m3 0h1m3 0h1m3 0h1m3 0h1m3 0h1m3 0h1m3 0h1m3 0h1m3 0h1m3 1h1m3 0h1m3 0h1m3 0h1m3 0h1m3 0h1"/></g>
<g class="aspect"><title>Sun conjunct Mercury</title><path stroke="#ff0" transform="translate(0 .5)" d="M0 0m193 202h1"/></g>
<g class="aspect"><title>Sun square Moon</title><path stroke="#f00" transform="translate(0 .5)" d="M0 0m193 202h1m3 0h1m3 0h1m3 0h1m3 0h1m3 0h1m3 1h1m3 0h1m3 0h1m3 0h1m3 0h1m3 0h1m3 0h1m3 0h1m3 0h1m3 0h1m3 0h1m3 1h1m3 0h1m3 0h1m3 0h1m3 0h1m3 0h1m3 0h1m3 0h1m3 0h1m3 0h1m3 1h1m3 0h1m3 0h1m3 0h1m3 0h1m3 0h1m3 0h1m3 0h1m3 0h1m3 0h1m3 0h1m3 1h1m3 0h1m3 0h1m3 0h1m3 0h1m3 0h1m3 0h1m3 0h1m3 0h1m3 0h1m3 0h1m3 1h1m3 0h1m3 0h1m3 0h1m3 0h1m3 0h1"/></g>
<g class="frame"><title>Window border and sidebar divider</title><path stroke="#bfbfbf" transform="translate(0 .5)" d="M0 0m0 0h760m-760 599h760"/><path stroke="#bfbfbf" transform="translate(.5)" d="M0 0m0 1v598m599-598v598m160-598v598"/></g>
<g class="info-0"><title>Astrolog 5.40</title><path stroke="#fff" transform="translate(0 .5)" d="M0 0m608 7h1m51 0h5m14 0h3m-75 1h1m1 0h1m3 1h4m1 0h2m1 0h2m2 0h3m3 0h3m9 0h3m3 0h3m8 0h4m17 0h1m-70 1h1m15 0h1m43 0h3m1 0h1m3 0h1m-68 1h3m63 0h1m-74 1h5m5 0h1m43 0h1m6 0h2m-57 1h4m15 0h3m9 0h3m3 0h3m9 0h3m3 0h2m10 0h3m-34 2h4"/><path stroke="#fff" transform="translate(.5)" d="M0 0m606 9v3m0 1v1m4-5v3m0 1v1m10-7v7m4-5v5m6-4v3m4-3v3m4-6v7m4-4v3m4-3v3m2-3v3m4-3v5m8-7v1m4 1v3m8-6v3m3-3v7m3-6v5m4-5v5"/></g>
<g class="info-1"><title>&quot;Anonymous&quot;</title><path stroke="#bfbfbf" transform="translate(0 .5)" d="M0 0m614 17h1m-2 1h1m1 0h1m3 1h3m3 0h3m3 0h3m9 0h1m1 0h1m3 0h3m9 0h4m-5 1h1m0 1h3m-52 1h5m40 0h1m6 0h1m-40 1h3m9 0h3m9 0h3m3 0h2m3 0h4m-28 2h4"/><path stroke="#bfbfbf" transform="translate(.5)" d="M0 0m607 17v3m2-3v3m3-1v3m0 1v1m4-5v3m0 1v1m2-5v5m4-4v4m2-4v3m4-3v3m2-4v5m4-4v4m2-5v4m4-4v6m2-6v5m2-4v2m2-2v4m2-4v3m4-3v3m2-4v4m4-4v5m9-7v3m2-3v3"/></g>
<g class="info-2"><title>Wed April 9, 1969</title><path stroke="#bfbfbf" transform="translate(0 .5)" d="M0 0m632 27h1m17 0h1m16 0h3m21 0h3m3 0h3m3 0h3m-75 1h1m1 0h1m51 0h1m14 0h1m-88 1h3m3 0h3m15 0h3m3 0h3m0 1h1m20 0h3m21 0h3m3 0h3m3 0h3m-94 1h5m-10 1h1m1 0h1m20 0h5m31 0h1m23 0h1m11 0h1m-90 1h4m2 0h3m15 0h3m27 0h3m15 0h1m1 0h1m3 0h3m3 0h3m3 0h3m-33 1h1"/><path stroke="#bfbfbf" transform="translate(.5)" d="M0 0m606 27v7m2-4v2m2-5v7m2-4v1m0 1v1m4-3v1m2-1v3m4-6v7m8-5v3m0 1v1m4-5v3m0 1v1m2-5v7m4-6v3m2-4v5m8-5v5m6-7v7m10-6v2m4-2v5m4-1v2m12-7v7m4-6v2m4-2v5m2-5v5m4-2v2m2-5v2m4-2v5"/></g>
<g class="info-3"><title>8:20am (ST +8:00 GMT)</title><path stroke="#bfbfbf" transform="translate(0 .5)" d="M0 0m613 37h3m9 0h3m3 0h3m23 0h1m3 0h3m2 0h2m1 0h2m14 0h3m9 0h3m3 0h3m9 0h3m8 0h2m1 0h2m2 0h1m-110 1h1m31 0h1m7 0h1m53 0h1m2 0h1m1 0h1m10 0h1m-115 1h1m12 0h1m3 0h3m3 0h1m1 0h1m46 0h1m6 0h1m5 0h1m-93 1h3m11 0h1m4 0h1m28 0h3m14 0h5m2 0h3m10 0h1m5 0h1m11 0h3m-99 1h1m5 0h1m4 0h1m60 0h1m4 0h1m5 0h1m-65 1h1m16 0h1m3 0h1m73 0h1m-122 1h3m8 0h5m2 0h3m3 0h2m18 0h1m3 0h3m21 0h3m9 0h3m3 0h3m9 0h3m15 0h1"/><path stroke="#bfbfbf" transform="translate(.5)" d="M0 0m612 38v2m0 1v2m4-5v2m0 1v2m9-1v1m3-5v2m2-2v5m4-5v5m2-3v3m4-3v4m2-5v5m2-4v2m2-2v4m9-5v3m5-4v2m4 1v2m4-6v7m12-6v2m0 1v2m4-5v2m0 1v2m4-5v2m0 1v2m8-5v5m4-5v5m2-5v5m4-5v5m8-5v5m4-2v2m2-6v7m2-5v2m2-4v7m4-7v7m7-5v3"/></g>
<g class="info-4"><title>&quot;Taiwan&quot;</title><path stroke="#bfbfbf" transform="translate(0 .5)" d="M0 0m612 47h2m1 0h2m9 0h1m-8 2h3m15 0h3m3 0h3m-25 3h1m17 0h1m-21 1h2m10 0h1m1 0h1m3 0h2"/><path stroke="#bfbfbf" transform="translate(.5)" d="M0 0m607 47v3m2-3v3m5-3v7m4-4v3m4-3v4m4-5v5m4-5v4m2-2v2m2-4v4m2-3v3m4-3v4m2-5v5m4-4v4m3-7v3m2-3v3"/></g>
<g class="info-5"><title>120°17E 22°38N</title><path stroke="#bfbfbf" transform="translate(0 .5)" d="M0 0m613 57h3m3 0h3m4 0h1m9 0h5m2 0h4m8 0h3m3 0h3m4 0h1m4 0h3m3 0h3m-75 1h1m4 0h1m12 0h1m1 0h1m3 0h1m22 0h1m5 0h1m6 0h1m1 0h1m2 0h1m12 0h1m-65 1h1m4 0h1m12 0h1m28 0h1m-54 1h1m4 0h1m17 0h1m4 0h3m11 0h1m5 0h1m10 0h2m3 0h3m-68 1h1m4 0h1m17 0h1m18 0h1m5 0h1m24 0h1m-16 1h1m-66 1h1m1 0h1m2 0h5m2 0h3m9 0h1m1 0h1m9 0h4m7 0h5m1 0h5m8 0h3m3 0h3"/><path stroke="#bfbfbf" transform="translate(.5)" d="M0 0m608 57v7m5-2v1m3-5v2m2-2v5m4-5v5m10-6v7m4-2v2m4-6v1m2-2v7m13-2v1m3-5v2m3 2v1m3-5v2m12-2v2m0 1v2m2-5v2m0 1v2m4-5v2m0 1v2m2-6v7m2-5v2m2-4v7"/></g>
<g class="info-6"><title>Alcabitius houses.</title><path stroke="#bfbfbf" transform="translate(0 .5)" d="M0 0m608 67h1m29 0h1m11 0h1m-44 1h1m1 0h1m9 1h3m3 0h3m3 0h3m8 0h2m1 0h2m14 0h4m8 0h3m3 0h3m9 0h4m2 0h3m3 0h4m-85 1h1m37 0h1m29 0h1m11 0h1m-42 1h3m27 0h3m2 0h5m2 0h3m-100 1h5m11 0h1m4 0h1m29 0h1m6 0h1m22 0h1m6 0h1m11 0h1m2 0h2m-92 1h3m3 0h2m4 0h3m21 0h2m3 0h4m15 0h3m3 0h2m3 0h4m3 0h4m1 0h4m3 0h2"/><path stroke="#bfbfbf" transform="translate(.5)" d="M0 0m606 69v3m0 1v1m4-5v3m0 1v1m4-7v7m4-4v3m6-3v3m4-3v4m2-7v7m4-4v3m4-4v5m6-7v7m6-5v5m4-5v4m4-4v5m14-7v7m4-4v4m2-4v3m4-3v3m2-4v4m4-4v5m8-4v1m0 1v1m4-3v1"/></g>
<g class="info-7"><title>Tropical, Geocentric.</title><path stroke="#bfbfbf" transform="translate(0 .5)" d="M0 0m606 77h2m1 0h2m21 0h1m34 0h3m46 0h1m-47 1h1m-58 1h3m3 0h3m3 0h3m9 0h3m3 0h3m27 0h3m3 0h3m3 0h3m3 0h3m3 0h3m2 0h2m1 0h2m2 0h3m9 0h3m-108 1h1m23 0h1m27 0h3m17 0h1m23 0h1m11 0h1m-53 1h5m13 0h5m-55 1h1m4 0h1m42 0h1m35 0h1m2 0h2m-110 1h3m3 0h3m9 0h3m3 0h2m22 0h3m3 0h4m2 0h3m3 0h3m3 0h4m26 0h3m3 0h2m-74 1h1"/><path stroke="#bfbfbf" transform="translate(.5)" d="M0 0m608 77v7m4-5v5m6-4v3m4-3v3m2-4v7m4-6v3m4-4v5m4-4v3m6-3v3m4-3v4m4-7v7m6-2v2m10-6v5m4-2v2m2-3v1m0 1v1m4-3v1m2-1v3m4-3v3m2-3v3m6-3v1m0 1v1m4-3v1m2-2v5m4-4v4m4-7v7m4-5v5m8-5v5m4-4v3"/></g>
<g class="info-8"><title>Julian Day = 2440320.5139</title><path stroke="#bfbfbf" transform="translate(0 .5)" d="M0 0m626 87h1m22 0h2m34 0h3m15 0h3m3 0h3m3 0h3m3 0h3m8 0h5m8 0h3m3 0h3m-103 1h1m32 0h1m23 0h1m5 0h1m24 0h1m4 0h1m-114 1h3m3 0h3m15 0h3m14 0h5m28 0h1m17 0h1m8 0h4m-49 1h1m2 0h3m1 0h1m1 0h3m1 0h1m3 0h1m5 0h2m5 0h1m4 0h1m23 0h2m3 0h3m-82 1h5m9 0h1m16 0h1m12 0h1m4 0h1m-107 1h1m17 0h1m17 0h1m5 0h1m50 0h1m18 0h2m3 0h1m11 0h1m5 0h1m-144 1h3m3 0h2m16 0h2m16 0h2m4 0h2m4 0h3m20 0h5m14 0h3m3 0h3m2 0h5m2 0h3m3 0h2m4 0h3m3 0h1m1 0h1m3 0h3m3 0h3m-94 2h4"/><path stroke="#bfbfbf" transform="translate(.5)" d="M0 0m606 91v2m4-6v6m2-4v4m4-4v5m4-7v7m6-5v5m4-4v3m4-3v4m2-5v5m4-4v4m8-7v7m4-5v3m2-2v3m4-3v4m2-5v4m4-4v6m21-3v1m3-5v2m2-3v3m3-3v7m3-7v3m3-3v7m3-6v5m4-5v5m6-5v2m0 1v2m3-1v1m3-5v2m2-2v5m4-5v5m8-5v1m4 1v3m4-6v7m8-6v2m0 1v2m2-5v2m4-2v5"/></g>
<g class="info-10"><title>1st house: 1Gem30</title><path stroke="#0f0" transform="translate(0 .5)" d="M0 0m691 107h3m15 0h3m3 0h3m-33 1h1m8 0h1m13 0h1m-12 1h3m3 0h1m1 0h1m11 0h1m-26 1h3m15 0h2m4 0h1m-21 1h5m14 0h1m-8 1h1m-24 1h1m1 0h1m3 0h3m3 0h4m8 0h3m3 0h3"/><path stroke="#0f0" transform="translate(.5)" d="M0 0m686 107v7m4-6v5m4-2v2m2-3v1m0 1v1m4-3v1m2-2v5m2-4v2m2-2v4m6-6v2m0 1v2m2-5v5m4-5v5"/><path stroke="#f00" transform="translate(0 .5)" d="M0 0m745 106h1m6 0h1m-7 1h1m1 0h2m1 0h1m-139 1h1m5 1h4m1 0h2m1 0h2m8 0h3m3 0h3m9 0h4m2 0h3m4 0h1m-51 1h1m35 0h1m-36 1h3m33 0h3m2 0h5m3 0h1m-47 1h1m28 0h1m6 0h1m-46 1h1m1 0h1m2 0h4m21 0h3m3 0h2m3 0h4m3 0h4m81 0h1m1 0h2m1 0h1m-7 1h1m6 0h1"/><path stroke="#f00" transform="translate(.5)" d="M0 0m614 107v7m12-7v7m10-7v7m4-4v4m2-4v3m4-3v3m2-4v4m4-4v5m8-4v1m0 1v1m4-3v1m83-4v7m3-7v7"/></g>
<g class="info-11"><title>2nd house: 28Gem27</title><path stroke="#0f0" transform="translate(0 .5)" d="M0 0m679 117h3m3 0h3m3 0h3m15 0h3m2 0h5m-41 1h1m15 0h1m13 0h1m-12 1h3m3 0h1m1 0h1m11 0h1m-37 1h1m3 0h3m4 0h3m16 0h1m4 0h1m-37 1h1m15 0h5m9 0h1m4 0h1m-38 2h5m2 0h3m3 0h3m3 0h4m7 0h5"/><path stroke="#0f0" transform="translate(.5)" d="M0 0m679 122v1m3-5v2m2-2v2m0 1v2m4-5v2m0 1v2m2-5v5m4-2v2m2-3v1m0 1v1m4-3v1m2-2v5m2-4v2m2-2v4m3-2v1m3-5v2m2 2v2m4-6v1"/><path stroke="#ff0" transform="translate(0 .5)" d="M0 0m745 116h1m6 0h1m-140 1h3m130 0h1m1 0h2m1 0h1m-140 1h1m6 1h3m3 0h3m9 0h3m3 0h3m9 0h4m2 0h3m4 0h1m-54 1h1m38 0h1m-41 1h1m40 0h3m2 0h5m3 0h1m-18 1h1m6 0h1m-47 1h5m8 0h3m15 0h3m3 0h2m3 0h4m3 0h4m81 0h1m1 0h2m1 0h1m-7 1h1m6 0h1"/><path stroke="#ff0" transform="translate(.5)" d="M0 0m613 122v1m3-5v2m2-1v5m4-4v4m2-4v3m4-6v7m8-7v7m4-4v4m2-4v3m4-3v3m2-4v4m4-4v5m8-4v1m0 1v1m4-3v1m83-4v7m3-7v7"/></g>
<g class="info-12"><title>3rd house: 25Can24</title><path stroke="#00f" transform="translate(0 .5)" d="M0 0m679 127h3m2 0h5m2 0h3m15 0h3m-34 1h1m15 0h1m13 0h1m-25 1h4m9 0h3m3 0h3m-25 1h1m29 0h1m2 0h3m1 0h1m-39 1h1m29 0h1m-27 1h1m9 0h1m4 0h1m-22 1h5m2 0h3m3 0h3m3 0h2m9 0h5"/><path stroke="#00f" transform="translate(.5)" d="M0 0m679 132v1m3-5v2m2-2v1m4 1v3m2-5v5m6-3v3m4-3v4m2-5v5m4-4v4m3-2v1m3-5v2m2-3v3m3-3v7"/><path stroke="#0f0" transform="translate(0 .5)" d="M0 0m613 127h3m131 0h3m-138 1h1m132 0h2m3 0h2m-133 1h3m3 0h3m9 0h3m3 0h3m9 0h4m2 0h3m4 0h1m75 0h1m-131 1h2m6 0h1m31 0h1m90 0h2m-92 1h3m2 0h5m3 0h1m81 0h2m-140 1h1m38 0h1m6 0h1m93 0h1m-140 1h3m9 0h3m15 0h3m3 0h2m3 0h4m3 0h4m80 0h2m3 0h2m-5 1h3"/><path stroke="#0f0" transform="translate(.5)" d="M0 0m616 128v2m0 1v2m2-4v5m6-4v3m4-6v7m8-7v7m4-4v4m2-4v3m4-3v3m2-4v4m4-4v5m8-4v1m0 1v1m4-3v1m80 0v2m3-2v2m2-4v2m3-2v2"/></g>
<g class="info-13"><title>4th house: 22Leo22</title><path stroke="#00f" transform="translate(0 .5)" d="M0 0m747 136h3m-4 1h1m3 0h1m-133 2h2m1 0h2m2 0h3m9 0h3m3 0h3m9 0h4m2 0h3m4 0h1m-57 1h3m1 0h1m37 0h1m0 1h3m2 0h5m3 0h1m-18 1h1m6 0h1m85 0h1m-102 1h3m3 0h2m3 0h4m3 0h4m80 0h1m5 0h1m0 1h1"/><path stroke="#00f" transform="translate(.5)" d="M0 0m612 137v3m3-3v7m5-7v7m4-7v7m4-4v4m8-7v7m4-4v4m2-4v3m4-3v3m2-4v4m4-4v5m8-4v1m0 1v1m4-3v1m81-3v3m1 0v2m4-2v2m1-5v3"/><path stroke="#f00" transform="translate(0 .5)" d="M0 0m679 137h3m3 0h3m21 0h3m3 0h3m-40 1h1m5 0h1m23 0h1m5 0h1m-18 1h3m3 0h3m-25 1h1m5 0h1m23 0h1m5 0h1m-38 1h1m5 0h1m9 0h5m9 0h1m5 0h1m-39 2h5m1 0h5m2 0h4m2 0h4m2 0h3m2 0h5m1 0h5"/><path stroke="#f00" transform="translate(.5)" d="M0 0m679 142v1m3-5v2m3 2v1m3-5v2m2-3v7m6-4v1m0 1v1m4-3v1m2-1v3m4-3v3m3-1v1m3-5v2m3 2v1m3-5v2"/></g>
<g class="info-14"><title>5th house: 25Vir24</title><path stroke="#f00" transform="translate(0 .5)" d="M0 0m744 146h1m1 0h1m1 0h1m-137 1h5m133 1h1m-139 1h4m2 0h2m1 0h2m2 0h3m9 0h3m3 0h3m9 0h4m2 0h3m4 0h1m-15 1h1m0 1h3m2 0h5m3 0h1m-57 1h1m38 0h1m6 0h1m-46 1h3m27 0h3m3 0h2m3 0h4m3 0h4m85 0h1m-2 1h1m1 0h1"/><path stroke="#f00" transform="translate(.5)" d="M0 0m612 148v1m4 1v3m4-6v7m4-7v7m4-4v4m8-7v7m4-4v4m2-4v3m4-3v3m2-4v4m4-4v5m8-4v1m0 1v1m4-3v1m81-4v7m2-7v7m2-7v6m2-6v6"/><path stroke="#ff0" transform="translate(0 .5)" d="M0 0m679 147h3m2 0h5m9 0h1m10 0h3m-34 1h1m29 0h1m-25 1h4m15 0h3m-25 1h1m24 0h1m4 0h1m2 0h3m1 0h1m-39 1h1m29 0h1m-27 1h1m-7 1h5m2 0h3m20 0h5"/><path stroke="#ff0" transform="translate(.5)" d="M0 0m679 152v1m3-5v2m2-2v1m4 1v3m2-6v3m1 0v2m1 0v2m1-4v2m1-5v3m4-1v5m4-5v5m7-2v1m3-5v2m2-3v3m3-3v7"/></g>
<g class="info-15"><title>6th house: 28Lib27</title><path stroke="#0f0" transform="translate(0 .5)" d="M0 0m679 157h3m3 0h3m10 0h1m10 0h3m2 0h5m-41 1h1m29 0h1m-6 1h3m11 0h1m-37 1h1m3 0h3m23 0h1m4 0h1m-37 1h1m29 0h1m4 0h1m-38 2h5m2 0h3m3 0h4m8 0h3m2 0h5"/><path stroke="#0f0" transform="translate(.5)" d="M0 0m679 162v1m3-5v2m2-2v2m0 1v2m4-5v2m0 1v2m2-6v7m8-5v5m4-7v7m4-4v3m3-1v1m3-5v2m2 2v2m4-6v1"/><path stroke="#ff0" transform="translate(0 .5)" d="M0 0m613 157h3m0 1h1m130 0h3m-132 1h2m1 0h2m2 0h3m9 0h3m3 0h3m9 0h4m2 0h3m4 0h1m-56 1h3m38 0h1m0 1h3m2 0h5m3 0h1m75 0h4m1 0h4m-102 1h1m6 0h1m-46 1h3m27 0h3m3 0h2m3 0h4m3 0h4m79 0h9"/><path stroke="#ff0" transform="translate(.5)" d="M0 0m612 158v5m4-2v2m4-6v7m4-7v7m4-4v4m8-7v7m4-4v4m2-4v3m4-3v3m2-4v4m4-4v5m8-4v1m0 1v1m4-3v1m82-2v2m4-2v2"/></g>
<g class="info-16"><title>7th house: 1Sag30</title><path stroke="#0f0" transform="translate(0 .5)" d="M0 0m750 166h3m-141 1h5m134 0h1m-2 1h1m-136 1h1m2 0h2m1 0h2m2 0h3m9 0h3m3 0h3m9 0h4m2 0h3m4 0h1m76 0h1m3 0h1m-136 1h1m39 0h1m91 0h1m1 0h1m-136 1h1m41 0h3m2 0h5m3 0h1m78 0h1m-97 1h1m6 0h1m87 0h1m1 0h1m-106 1h3m3 0h2m3 0h4m3 0h4m80 0h1m3 0h1m-6 1h1"/><path stroke="#0f0" transform="translate(.5)" d="M0 0m612 172v2m4-6v1m4-2v7m4-7v7m4-4v4m8-7v7m4-4v4m2-4v3m4-3v3m2-4v4m4-4v5m8-4v1m0 1v1m4-3v1m88-4v2"/><path stroke="#f00" transform="translate(0 .5)" d="M0 0m691 167h3m15 0h3m3 0h3m-33 1h1m8 0h1m13 0h1m-12 1h3m3 0h3m11 0h1m-27 1h3m16 0h2m4 0h1m-2 1h1m-26 1h1m8 0h1m8 0h1m-24 1h1m1 0h1m3 0h3m3 0h2m4 0h3m3 0h3m3 0h3m-16 2h4"/><path stroke="#f00" transform="translate(.5)" d="M0 0m686 167v7m4-6v2m4 1v2m2-3v3m4-3v4m2-4v3m4-3v5m6-7v2m0 1v2m2-5v5m4-5v5"/></g>
<g class="info-17"><title>8th house: 28Sag27</title><path stroke="#00f" transform="translate(0 .5)" d="M0 0m750 176h3m-140 1h3m135 0h1m-2 1h1m-133 1h2m1 0h2m2 0h3m9 0h3m3 0h3m9 0h4m2 0h3m4 0h1m76 0h1m3 0h1m-137 1h3m38 0h1m91 0h1m1 0h1m-94 1h3m2 0h5m3 0h1m78 0h1m-97 1h1m6 0h1m87 0h1m1 0h1m-136 1h3m27 0h3m3 0h2m3 0h4m3 0h4m80 0h1m3 0h1m-6 1h1"/><path stroke="#00f" transform="translate(.5)" d="M0 0m612 178v2m0 1v2m4-5v2m0 1v2m4-6v7m4-7v7m4-4v4m8-7v7m4-4v4m2-4v3m4-3v3m2-4v4m4-4v5m8-4v1m0 1v1m4-3v1m88-4v2"/><path stroke="#f00" transform="translate(0 .5)" d="M0 0m679 177h3m3 0h3m3 0h3m15 0h3m2 0h5m-41 1h1m15 0h1m13 0h1m-12 1h3m3 0h3m11 0h1m-37 1h1m3 0h3m3 0h3m17 0h1m4 0h1m-37 1h1m29 0h1m4 0h1m-26 1h1m8 0h1m-22 1h5m2 0h3m3 0h3m3 0h2m4 0h3m2 0h5m-11 2h4"/><path stroke="#f00" transform="translate(.5)" d="M0 0m679 182v1m3-5v2m2-2v2m0 1v2m4-5v2m0 1v2m2-5v2m4 1v2m2-3v3m4-3v4m2-4v3m4-3v5m3-3v1m3-5v2m2 2v2m4-6v1"/></g>
<g class="info-18"><title>9th house: 25Cap24</title><path stroke="#f00" transform="translate(0 .5)" d="M0 0m750 186h2m-139 1h3m128 0h1m3 0h2m-132 2h2m1 0h2m2 0h3m9 0h3m3 0h3m9 0h4m2 0h3m4 0h1m81 0h2m-139 1h3m38 0h1m0 1h3m2 0h5m3 0h1m-57 1h1m38 0h1m6 0h1m-46 1h3m27 0h3m3 0h2m3 0h4m3 0h4m86 1h1"/><path stroke="#f00" transform="translate(.5)" d="M0 0m612 188v2m4-2v5m4-6v7m4-7v7m4-4v4m8-7v7m4-4v4m2-4v3m4-3v3m2-4v4m4-4v5m8-4v1m0 1v1m4-3v1m81-5v5m1 0v3m1-6v3m1-5v1m1 1v1m2 1v1m1-4v2m0 2v3"/><path stroke="#ff0" transform="translate(0 .5)" d="M0 0m679 187h3m2 0h5m2 0h3m15 0h3m-34 1h1m15 0h1m13 0h1m-25 1h4m9 0h3m3 0h3m-25 1h1m29 0h1m2 0h3m1 0h1m-39 1h1m29 0h1m-27 1h1m9 0h1m4 0h1m-22 1h5m2 0h3m3 0h3m3 0h2m4 0h3m2 0h5"/><path stroke="#ff0" transform="translate(.5)" d="M0 0m679 192v1m3-5v2m2-2v1m4 1v3m2-5v5m6-3v3m4-3v4m2-5v7m4-6v3m3-1v1m3-5v2m2-3v3m3-3v7"/></g>
<g class="info-19"><title>10th house: 22Aqu22</title><path stroke="#0f0" transform="translate(0 .5)" d="M0 0m679 197h3m3 0h3m4 0h1m16 0h3m3 0h3m-40 1h1m5 0h1m6 0h1m1 0h1m14 0h1m5 0h1m-18 1h3m-19 1h1m5 0h1m23 0h1m5 0h1m-38 1h1m5 0h1m23 0h1m5 0h1m-27 1h5m10 0h1m-28 1h5m1 0h5m8 0h3m3 0h2m3 0h5m1 0h5"/><path stroke="#0f0" transform="translate(.5)" d="M0 0m679 202v1m3-5v2m3 2v1m3-5v2m2-1v3m0 1v1m4-5v3m0 1v1m2-4v3m4-3v6m2-7v4m4-4v5m3-2v1m3-5v2m3 2v1m3-5v2"/><path stroke="#ff0" transform="translate(0 .5)" d="M0 0m752 196h1m-140 1h3m129 0h2m1 0h2m-143 1h1m139 0h2m1 0h2m-137 1h1m2 0h2m1 0h2m2 0h3m9 0h3m3 0h3m9 0h4m2 0h3m4 0h1m75 0h1m-131 1h1m39 0h1m-42 1h1m41 0h3m2 0h5m3 0h1m83 0h1m-102 1h1m6 0h1m86 0h2m1 0h2m-143 1h1m1 0h1m3 0h3m27 0h3m3 0h2m3 0h4m3 0h4m82 0h2m1 0h2m-8 1h1"/><path stroke="#ff0" transform="translate(.5)" d="M0 0m608 197v7m4-6v5m4-5v5m4-6v7m4-7v7m4-4v4m8-7v7m4-4v4m2-4v3m4-3v3m2-4v4m4-4v5m8-4v1m0 1v1m4-3v1m81-3v1m0 4v1m1-8v1m0 4v1m1-3v1m0 4v1m2-9v1m0 4v1m1-3v1m0 4v1m1-8v1m0 4v1"/></g>
<g class="info-20"><title>11th house: 25Pis24</title><path stroke="#00f" transform="translate(0 .5)" d="M0 0m679 207h3m2 0h5m2 0h3m4 0h1m10 0h3m-34 1h1m29 0h1m-25 1h4m15 0h4m-26 1h1m9 0h3m8 0h1m8 0h1m2 0h3m1 0h1m-39 1h1m22 0h3m4 0h1m-27 1h1m21 0h1m-29 1h5m2 0h3m14 0h4m2 0h5"/><path stroke="#00f" transform="translate(.5)" d="M0 0m679 212v1m3-5v2m2-2v1m4 1v3m2-6v7m4-6v2m4-1v5m11-2v1m3-5v2m2-3v3m3-3v7"/><path stroke="#0f0" transform="translate(0 .5)" d="M0 0m744 206h1m7 0h1m-8 1h1m5 0h1m-145 1h1m5 0h1m4 1h2m1 0h2m2 0h3m9 0h3m3 0h3m9 0h4m2 0h3m4 0h1m-15 1h1m89 0h9m-98 1h3m2 0h5m3 0h1m-18 1h1m6 0h1m-52 1h1m1 0h1m3 0h1m1 0h1m27 0h3m3 0h2m3 0h4m3 0h4m80 0h1m5 0h1m-8 1h1m7 0h1"/><path stroke="#0f0" transform="translate(.5)" d="M0 0m608 207v7m6-7v7m6-7v7m4-7v7m4-4v4m8-7v7m4-4v4m2-4v3m4-3v3m2-4v4m4-4v5m8-4v1m0 1v1m4-3v1m82-3v2m0 1v2m4-5v2m0 1v2"/></g>
<g class="info-21"><title>12th house: 28Ari27</title><path stroke="#00f" transform="translate(0 .5)" d="M0 0m745 216h2m3 0h2m-139 1h3m-9 1h1m4 0h1m5 1h2m1 0h2m2 0h3m9 0h3m3 0h3m9 0h4m2 0h3m4 0h1m76 0h1m5 0h1m-137 1h1m38 0h1m-41 1h1m40 0h3m2 0h5m3 0h1m-18 1h1m6 0h1m-52 1h1m1 0h1m2 0h5m26 0h3m3 0h2m3 0h4m3 0h4"/><path stroke="#00f" transform="translate(.5)" d="M0 0m608 217v7m5-2v1m3-5v2m4-3v7m4-7v7m4-4v4m8-7v7m4-4v4m2-4v3m4-3v3m2-4v4m4-4v5m8-4v1m0 1v1m4-3v1m80-4v2m3-2v3m1 0v5m1-8v3m3-3v2"/><path stroke="#f00" transform="translate(0 .5)" d="M0 0m679 217h3m3 0h3m4 0h1m11 0h1m4 0h3m2 0h5m-41 1h1m12 0h1m1 0h1m14 0h1m-12 1h3m17 0h1m-37 1h1m3 0h3m12 0h1m10 0h1m4 0h1m-37 1h1m29 0h1m4 0h1m-26 1h5m-17 1h5m2 0h3m20 0h5"/><path stroke="#f00" transform="translate(.5)" d="M0 0m679 222v1m3-5v2m2-2v2m0 1v2m4-5v2m0 1v2m2-4v3m0 1v1m4-5v3m0 1v1m2-5v5m8-5v5m5-2v1m3-5v2m2 2v2m4-6v1"/></g>
<g class="info-23"><title>Sun: 18Ari59 - 0°00&#x27;</title><path stroke="#bfbfbf" transform="translate(0 .5)" d="M0 0m709 237h3m4 0h1m4 0h3m3 0h3m-15 1h1m1 0h1m-7 1h1m4 0h1m6 0h1m5 0h1m3 0h1m-38 1h5m9 0h1m11 0h1m5 0h1m-20 1h1m11 0h1m5 0h1m-19 2h3m9 0h3m3 0h3"/><path stroke="#bfbfbf" transform="translate(.5)" d="M0 0m708 238v5m4-5v5m8-5v5m4-5v5m2-5v5m4-5v5m4-6v2"/><path stroke="#f00" transform="translate(0 .5)" d="M0 0m747 236h3m-137 1h3m33 0h3m4 0h1m11 0h1m3 0h5m2 0h3m63 0h2m3 0h2m-136 1h1m26 0h1m11 0h1m1 0h1m-33 1h3m4 0h1m28 0h3m8 0h4m-63 1h3m33 0h3m12 0h1m14 0h3m66 0h1m-117 1h1m-21 1h1m8 0h1m32 0h5m13 0h1m5 0h1m-66 1h3m3 0h2m22 0h1m1 0h1m3 0h3m21 0h3m3 0h3m63 0h2m3 0h2m-5 1h3"/><path stroke="#f00" transform="translate(.5)" d="M0 0m612 238v2m4 1v2m2-4v4m4-4v5m2-5v5m4-4v4m16-7v7m4-6v2m0 1v2m4-5v2m0 1v2m2-4v3m0 1v1m4-5v3m0 1v1m2-5v5m8-5v5m4-6v1m4 1v3m2-5v2m4-2v5m62-4v3m1-4v1m0 3v1m6-5v1m0 3v1m1-4v3"/></g>
<g class="info-24"><title>Moon: 11Cap26 - 5°09&#x27;</title><path stroke="#00f" transform="translate(0 .5)" d="M0 0m746 246h3m-4 1h1m3 0h2m-144 1h1m1 0h1m136 0h1m-134 1h3m3 0h3m3 0h3m4 0h1m-1 2h1m113 1h1m-134 1h3m3 0h3m123 0h1m3 0h2m-5 1h3"/><path stroke="#00f" transform="translate(.5)" d="M0 0m606 247v7m2-5v2m2-4v7m2-4v3m4-3v3m2-3v3m4-3v3m2-4v5m4-4v4m119-5v3m3-4v1m0 3v1m1-4v3"/><path stroke="#bfbfbf" transform="translate(0 .5)" d="M0 0m708 247h5m3 0h1m4 0h3m3 0h3m-15 1h1m1 0h1m-10 1h4m4 0h1m6 0h1m9 0h1m-38 1h5m21 0h1m4 0h3m-9 1h1m-14 1h1m17 0h1m-18 1h3m9 0h3m3 0h3"/><path stroke="#bfbfbf" transform="translate(.5)" d="M0 0m708 248v1m4 1v3m8-5v5m4-5v5m2-5v2m4-2v5m4-6v2"/><path stroke="#ff0" transform="translate(0 .5)" d="M0 0m655 247h3m15 0h3m3 0h3m-39 1h1m5 0h1m8 0h1m13 0h1m9 0h1m-22 1h3m3 0h3m5 1h1m3 0h3m-8 1h1m-17 1h1m4 0h1m-21 1h1m1 0h1m3 0h1m1 0h1m3 0h3m3 0h2m4 0h3m2 0h5m2 0h3"/><path stroke="#ff0" transform="translate(.5)" d="M0 0m644 247v7m6-7v7m4-6v5m6-3v3m4-3v4m2-5v7m4-6v3m3-1v1m3-5v2m2-2v5m4-2v2"/></g>
<g class="info-25"><title>Merc: 19Ari02 - 0°51&#x27;</title><path stroke="#0f0" transform="translate(0 .5)" d="M0 0m746 256h1m3 0h1m-4 1h3m-143 1h1m1 0h1m3 1h3m3 0h3m3 0h3m4 0h1m-11 1h1m5 0h1m-17 1h5m15 0h1m114 0h1m1 0h1m-122 1h1m-16 1h4m8 0h3m118 0h5"/><path stroke="#0f0" transform="translate(.5)" d="M0 0m606 257v7m2-5v2m2-4v7m2-4v1m0 1v1m4-3v1m2-2v5m6-4v3m122-5v3m2 0v2m0 1v1m2-7v3"/><path stroke="#bfbfbf" transform="translate(0 .5)" d="M0 0m709 257h3m4 0h1m3 0h5m-10 1h1m1 0h1m9 0h1m-17 1h1m4 0h1m3 0h4m9 0h1m-38 1h5m9 0h1m-2 1h1m10 1h1m-12 1h3m9 0h3m3 0h1m1 0h1"/><path stroke="#bfbfbf" transform="translate(.5)" d="M0 0m708 258v5m4-5v5m8-5v1m4 1v3m4-6v7m6-7v2"/><path stroke="#f00" transform="translate(0 .5)" d="M0 0m649 257h3m4 0h1m11 0h1m4 0h3m3 0h3m-39 1h1m11 0h1m1 0h1m20 0h1m-18 1h3m11 0h1m-27 1h3m12 0h1m9 0h1m6 0h1m-9 1h1m6 0h1m-33 1h1m5 0h5m-16 1h1m1 0h1m3 0h3m21 0h3m2 0h5"/><path stroke="#f00" transform="translate(.5)" d="M0 0m644 257v7m4-6v2m4-2v5m2-4v3m0 1v1m4-5v3m0 1v1m2-5v5m8-5v5m4-6v5m4-5v5m3-1v1m3-5v2"/></g>
<g class="info-26"><title>Venu: 18Ari23R + 7°17&#x27;</title><path stroke="#0f0" transform="translate(0 .5)" d="M0 0m747 266h3m-137 3h3m3 0h3m10 0h1m114 1h1m1 0h1m-138 1h5m15 0h1m-6 1h1m118 0h5m-138 1h4m8 0h2"/><path stroke="#0f0" transform="translate(.5)" d="M0 0m606 267v3m1 0v2m1 0v2m1-4v2m1-5v3m2 0v1m0 1v1m4-3v1m2-2v5m4-4v4m2-5v4m4-4v5m118-7v3m2 0v2m0 1v2m2-8v3"/><path stroke="#bfbfbf" transform="translate(0 .5)" d="M0 0m708 267h5m3 0h1m9 0h5m-16 1h1m1 0h1m3 0h1m-11 1h1m4 0h1m12 0h1m3 0h1m-38 1h5m9 0h1m17 0h1m-20 1h1m17 0h1m-7 2h1m1 0h1"/><path stroke="#bfbfbf" transform="translate(.5)" d="M0 0m698 268v2m0 1v2m10-1v2m4-6v1m10-2v7m4-2v2m4-6v1m4-2v2"/><path stroke="#f00" transform="translate(0 .5)" d="M0 0m649 267h3m4 0h1m11 0h1m4 0h3m3 0h3m-39 1h1m11 0h1m1 0h1m14 0h1m5 0h1m-18 1h3m-15 1h3m12 0h1m10 0h1m4 0h2m-8 1h1m-21 1h5m19 0h1m-36 1h1m1 0h1m3 0h3m20 0h5m2 0h3"/><path stroke="#f00" transform="translate(.5)" d="M0 0m644 267v7m4-6v2m0 1v2m4-5v2m0 1v2m2-4v3m0 1v1m4-5v3m0 1v1m2-5v5m8-5v5m5-2v1m3-5v2m6-2v2m0 1v2"/><path stroke="#fff" transform="translate(0 .5)" d="M0 0m685 267h3m-3 3h3m-1 2h1m0 1h1"/><path stroke="#fff" transform="translate(.5)" d="M0 0m684 267v7m2-3v1m2-4v2"/></g>
<g class="info-27"><title>Mars: 14Sag49 + 0°25&#x27;</title><path stroke="#bfbfbf" transform="translate(0 .5)" d="M0 0m709 277h3m4 0h1m4 0h3m2 0h5m-16 1h1m1 0h1m2 0h1m-10 1h1m4 0h1m9 0h4m3 0h1m-38 1h5m9 0h1m12 0h1m-15 1h1m12 0h1m3 1h1m-18 1h3m8 0h5m2 0h3"/><path stroke="#bfbfbf" transform="translate(.5)" d="M0 0m698 278v2m0 1v2m10-5v5m4-5v5m9-1v1m3-5v2m2-2v1m4 1v3m4-6v2"/><path stroke="#f00" transform="translate(0 .5)" d="M0 0m750 276h3m-98 1h3m21 0h3m69 0h1m-145 1h1m1 0h1m33 0h1m14 0h1m91 0h1m-138 1h3m3 0h3m3 0h4m3 0h1m28 0h3m3 0h3m76 0h2m1 0h1m-128 1h1m1 0h1m23 0h3m1 0h1m2 0h3m14 0h3m1 0h1m2 0h3m63 0h1m2 0h1m-124 1h3m4 0h1m-18 1h1m12 0h1m25 0h1m8 0h1m14 0h1m-66 1h2m9 0h4m15 0h1m1 0h1m9 0h3m3 0h2m4 0h3m9 0h3m63 0h1m2 0h1m-3 1h2m-82 1h4"/><path stroke="#f00" transform="translate(.5)" d="M0 0m606 277v7m2-5v2m2-4v7m2-4v3m4-3v4m2-5v5m26-7v7m4-7v3m3-3v7m3-6v2m4 1v2m2-3v3m4-3v4m2-4v3m4-3v5m2-8v3m3-3v7m3-6v2m4-2v5m62-2v2m5-2v2m3-6v2"/></g>
<g class="info-28"><title>Jupi: 28Vir54R + 1°34&#x27;</title><path stroke="#bfbfbf" transform="translate(0 .5)" d="M0 0m716 287h1m4 0h3m-15 1h1m5 0h1m1 0h1m2 0h1m-5 1h1m16 0h1m-38 1h5m21 0h2m2 0h3m1 0h1m-11 2h1m-12 1h1m1 0h1m9 0h3"/><path stroke="#bfbfbf" transform="translate(.5)" d="M0 0m698 288v2m0 1v2m12-6v7m14-6v2m0 1v2m2-6v3m3-3v7m5-7v2"/><path stroke="#f00" transform="translate(0 .5)" d="M0 0m751 286h1m-126 1h1m118 0h2m-128 2h3m10 0h1m-1 2h1m-18 1h1m-9 1h3m3 0h2m4 0h3m123 0h8"/><path stroke="#f00" transform="translate(.5)" d="M0 0m606 291v2m4-6v6m2-4v4m4-4v5m2-5v7m4-6v3m4-4v5m119-2v1m1-3v2m1-4v2m3-3v6m0 1v1"/><path stroke="#ff0" transform="translate(0 .5)" d="M0 0m643 287h3m3 0h3m10 0h1m9 0h5m-35 1h1m24 1h3m2 0h4m-31 1h1m3 0h3m18 0h1m7 0h3m1 0h1m-39 1h1m27 1h1m-31 1h5m2 0h3m21 0h3"/><path stroke="#ff0" transform="translate(.5)" d="M0 0m643 292v1m3-5v2m2-2v2m0 1v2m4-5v2m0 1v2m2-6v3m1 0v2m1 0v2m1-4v2m1-5v3m4-1v5m4-5v5m6-6v1m4 1v3m2-6v3m3-3v7"/><path stroke="#fff" transform="translate(0 .5)" d="M0 0m685 287h3m-3 3h3m-1 2h1m0 1h1"/><path stroke="#fff" transform="translate(.5)" d="M0 0m684 287v7m2-3v1m2-4v2"/></g>
<g class="info-29"><title>Satu: 27Ari21 - 2°14&#x27;</title><path stroke="#bfbfbf" transform="translate(0 .5)" d="M0 0m709 297h3m4 0h1m-9 1h1m6 0h1m1 0h1m3 0h1m-6 1h1m16 0h1m-38 1h5m10 0h1m14 0h3m1 0h1m-21 1h1m-3 2h5m8 0h1m1 0h1"/><path stroke="#bfbfbf" transform="translate(.5)" d="M0 0m709 302v1m3-5v2m10-3v7m4-7v3m3-3v7m5-7v2"/><path stroke="#f00" transform="translate(0 .5)" d="M0 0m643 297h3m2 0h5m3 0h1m11 0h1m4 0h3m-34 1h1m12 0h1m1 0h1m14 0h1m6 0h1m-29 1h1m9 0h3m-19 1h1m4 0h1m13 0h1m10 0h1m-32 1h1m4 0h1m24 0h1m-21 1h5m-17 1h5m25 0h5m2 0h1m1 0h1"/><path stroke="#f00" transform="translate(.5)" d="M0 0m643 302v1m3-5v2m2 2v2m4-6v1m2 0v3m0 1v1m4-5v3m0 1v1m2-5v5m8-5v5m5-2v1m3-5v2m4-3v7"/><path stroke="#ff0" transform="translate(0 .5)" d="M0 0m607 297h3m135 0h2m1 0h2m-140 1h1m2 1h3m2 0h2m1 0h2m9 0h1m116 0h2m-144 1h3m138 0h1m-117 1h1m-27 1h1m8 0h1m11 0h1m-21 1h3m3 0h2m10 0h2m124 1h1"/><path stroke="#ff0" transform="translate(.5)" d="M0 0m606 298v2m4 1v2m2-3v3m4-3v4m4-7v7m4-5v4m4-4v5m119-8v8m3-2v2m1-4v2"/></g>
<g class="info-30"><title>Uran: 1Lib14R + 0°46&#x27;</title><path stroke="#0f0" transform="translate(0 .5)" d="M0 0m745 306h1m5 0h1m-90 1h1m-14 1h1m23 0h1m-61 1h3m3 0h3m3 0h3m4 0h1m34 0h3m76 0h5m-135 1h1m61 0h3m1 0h1m-51 1h1m112 0h1m5 0h1m-131 1h1m125 0h1m1 0h1m-143 1h3m9 0h2m28 0h1m1 0h1m3 0h4m8 0h3m3 0h1m1 0h1m72 1h1"/><path stroke="#0f0" transform="translate(.5)" d="M0 0m606 307v6m4-6v6m2-4v5m6-4v3m4-3v4m2-5v5m4-4v4m22-7v7m4-7v7m8-5v5m4-7v7m4-4v3m4-6v7m4-7v3m3-3v7m65-7v2m0 1v1m1 2v1m1-6v1m0 1v3m1 0v1m1-7v2m0 1v1"/><path stroke="#bfbfbf" transform="translate(0 .5)" d="M0 0m709 307h3m4 0h1m10 0h3m-15 1h1m1 0h1m12 0h1m-20 1h1m4 0h1m16 0h1m-38 1h5m9 0h1m9 0h3m1 0h1m2 0h3m-21 1h1m-1 2h3m15 0h3"/><path stroke="#bfbfbf" transform="translate(.5)" d="M0 0m698 308v2m0 1v2m10-5v5m4-5v5m8-6v3m3-3v7m3-6v5m4-2v2m4-6v2"/><path stroke="#fff" transform="translate(0 .5)" d="M0 0m685 307h3m-3 3h3m-1 2h1m0 1h1"/><path stroke="#fff" transform="translate(.5)" d="M0 0m684 307v7m2-3v1m2-4v2"/></g>
<g class="info-31"><title>Nept: 28Sco19R + 1°45&#x27;</title><path stroke="#00f" transform="translate(0 .5)" d="M0 0m643 317h3m3 0h3m3 0h3m21 0h3m62 0h1m2 0h1m1 0h1m2 0h1m-146 1h1m34 0h1m15 0h1m14 0h1m-61 1h3m3 0h3m2 0h2m1 0h2m3 0h1m28 0h3m3 0h3m76 0h1m3 0h1m-106 1h1m3 0h3m3 0h3m6 0h1m14 0h3m65 0h1m1 0h1m-141 1h1m2 0h5m15 0h1m11 0h1m9 1h1m9 0h1m13 0h1m67 0h2m1 0h2m-138 1h4m2 0h3m20 0h5m2 0h3m3 0h3m3 0h3m3 0h3m3 0h1m1 0h1m3 0h3"/><path stroke="#00f" transform="translate(.5)" d="M0 0m606 317v7m2-5v2m2-4v7m2-4v1m0 1v1m4-3v1m2-2v7m4-6v3m4-6v7m17-2v1m3-5v2m2-2v2m0 1v2m4-5v2m0 1v2m2-5v2m4 1v2m2-3v3m6-3v3m4-3v3m4-6v7m4-6v2m4-2v5m63-7v3m3-3v9m3-9v3"/><path stroke="#bfbfbf" transform="translate(0 .5)" d="M0 0m716 317h1m9 0h5m-22 1h1m5 0h1m1 0h1m-2 1h1m9 0h4m3 0h1m-38 1h5m19 0h3m1 0h1m1 2h1m-18 1h1m1 0h1m15 0h3"/><path stroke="#bfbfbf" transform="translate(.5)" d="M0 0m698 318v2m0 1v2m12-6v7m10-7v3m3-3v7m3-6v1m4 1v3m4-6v2"/><path stroke="#fff" transform="translate(0 .5)" d="M0 0m685 317h3m-3 3h3m-1 2h1m0 1h1"/><path stroke="#fff" transform="translate(.5)" d="M0 0m684 317v7m2-3v1m2-4v2"/></g>
<g class="info-32"><title>Plut: 23Vir08R +15°57&#x27;</title><path stroke="#00f" transform="translate(0 .5)" d="M0 0m748 326h1m-142 1h3m137 0h1m1 0h1m-2 1h1m-125 1h2m1 0h2m3 0h1m113 0h1m3 0h1m-144 1h3m137 0h1m1 0h1m-118 1h1m-12 1h1m124 0h5m-132 1h2"/><path stroke="#00f" transform="translate(.5)" d="M0 0m606 327v7m4-6v2m4-3v7m4-5v4m4-4v5m4-7v7m119-8v3m3 1v2m0 1v2m3-9v3"/><path stroke="#bfbfbf" transform="translate(0 .5)" d="M0 0m708 327h5m3 0h1m3 0h5m1 0h5m-28 1h1m11 0h1m1 0h1m-10 1h4m4 0h1m3 0h4m5 0h1m3 0h1m-38 1h5m27 0h1m-2 1h1m-20 1h1m11 0h1m-18 1h1m1 0h1m3 0h3m9 0h3"/><path stroke="#bfbfbf" transform="translate(.5)" d="M0 0m698 328v2m0 1v2m6-6v7m4-6v1m4 1v3m8-5v1m4 1v3m2-1v2m4-6v1m4-2v2"/><path stroke="#ff0" transform="translate(0 .5)" d="M0 0m643 327h3m3 0h3m10 0h1m10 0h3m3 0h3m-40 1h1m5 0h1m18 1h3m5 0h1m-31 1h1m4 0h2m18 0h1m3 0h1m4 0h3m-38 1h1m28 0h1m-26 1h1m-7 1h5m2 0h3m21 0h3m3 0h3"/><path stroke="#ff0" transform="translate(.5)" d="M0 0m643 332v1m3-5v2m6-2v2m0 1v2m2-6v3m1 0v2m1 0v2m1-4v2m1-5v3m4-1v5m4-5v5m6-6v5m4-5v5m2-5v2m0 1v2m4-5v2m0 1v2"/><path stroke="#fff" transform="translate(0 .5)" d="M0 0m685 327h3m-3 3h3m-1 2h1m0 1h1"/><path stroke="#fff" transform="translate(.5)" d="M0 0m684 327v7m2-3v1m2-4v2"/></g>
<g class="info-33"><title>Node: 29Pis25R + 0°00&#x27;</title><path stroke="#00f" transform="translate(0 .5)" d="M0 0m643 337h3m3 0h3m3 0h3m4 0h1m10 0h3m2 0h5m-41 1h1m29 0h1m-6 1h4m7 0h4m-37 1h1m3 0h3m3 0h3m8 0h1m8 0h1m-32 1h1m22 0h3m4 0h1m-27 1h1m21 0h1m7 0h1m-37 1h5m2 0h3m14 0h4m2 0h5m2 0h3"/><path stroke="#00f" transform="translate(.5)" d="M0 0m643 342v1m3-5v2m2-2v2m4-2v5m2-6v7m4-6v2m4-1v5m11-2v1m3-5v2m2-2v1m4 1v3"/><path stroke="#007f7f" transform="translate(0 .5)" d="M0 0m747 336h3m-4 1h1m3 0h1m-144 1h1m5 1h3m3 0h3m3 0h3m4 0h1m-24 2h1m14 0h5m3 0h1m112 1h1m5 0h1m-139 1h3m3 0h3m3 0h4m115 0h1m7 0h1m-8 1h1m5 0h1"/><path stroke="#007f7f" transform="translate(.5)" d="M0 0m606 337v7m2-5v2m2-4v7m2-4v3m4-3v3m2-3v3m4-6v7m2-4v1m0 1v1m4-3v1m117-3v3m1 0v3m4-3v3m1-6v3"/><path stroke="#bfbfbf" transform="translate(0 .5)" d="M0 0m709 337h3m4 0h1m4 0h3m3 0h3m-15 1h1m1 0h1m-7 1h1m4 0h1m6 0h1m5 0h1m3 0h1m-38 1h5m9 0h1m11 0h1m5 0h1m-20 1h1m11 0h1m5 0h1m-19 2h3m9 0h3m3 0h3"/><path stroke="#bfbfbf" transform="translate(.5)" d="M0 0m698 338v2m0 1v2m10-5v5m4-5v5m8-5v5m4-5v5m2-5v5m4-5v5m4-6v2"/><path stroke="#fff" transform="translate(0 .5)" d="M0 0m685 337h3m-3 3h3m-1 2h1m0 1h1"/><path stroke="#fff" transform="translate(.5)" d="M0 0m684 337v7m2-3v1m2-4v2"/></g>
<g class="info-35"><title>Fire: 5, Earth: 3,</title><path stroke="#bfbfbf" transform="translate(0 .5)" d="M0 0m607 357h4m3 0h1m27 0h5m14 0h4m38 0h3m-4 1h1m-84 1h3m3 0h3m4 0h1m9 0h4m21 0h3m3 0h3m2 0h2m1 0h2m2 0h3m4 0h1m-86 1h3m12 0h1m38 0h3m12 0h1m27 0h2m-82 1h5m3 0h1m59 0h1m-51 1h1m26 0h1m32 0h1m-78 1h4m14 0h3m15 0h4m2 0h2m34 0h3m-57 1h1m59 0h1"/><path stroke="#bfbfbf" transform="translate(.5)" d="M0 0m606 357v7m8-5v5m4-5v5m6-4v1m0 1v1m4-3v1m14-3v1m4 1v3m4-1v2m10-7v7m6-4v3m4-3v4m2-5v5m8-7v7m4-7v7m4-4v4m18-6v2m0 1v2m4-1v2"/></g>
<g class="info-36"><title>Air : 3, Water: 2</title><path stroke="#bfbfbf" transform="translate(0 .5)" d="M0 0m608 367h1m5 0h1m28 0h3m57 0h3m-99 1h1m1 0h1m32 0h1m59 0h1m-84 1h3m10 0h1m34 0h3m2 0h2m1 0h2m2 0h3m3 0h3m4 0h1m-71 1h1m21 0h2m42 0h1m16 0h1m-74 1h1m45 0h5m9 0h1m11 0h1m-99 1h5m31 0h1m18 0h1m1 0h1m5 0h1m-27 1h3m21 0h2m10 0h4m19 0h5m-58 1h1"/><path stroke="#bfbfbf" transform="translate(.5)" d="M0 0m606 369v3m0 1v1m4-5v3m0 1v1m4-5v5m4-5v5m28-6v2m0 1v2m4-1v2m10-7v7m2-4v2m2-5v7m2-4v3m4-3v4m4-7v7m4-4v1m0 1v1m4-3v1m2-2v5m19-2v1m3-5v2"/></g>
<g class="info-37"><title>Car: 6, Fix: 2, Mut: 5</title><path stroke="#bfbfbf" transform="translate(0 .5)" d="M0 0m607 377h3m27 0h3m15 0h4m3 0h1m22 0h3m44 0h5m-127 1h1m29 0h1m43 0h1m18 0h1m1 0h1m-93 1h3m3 0h3m4 0h1m39 0h1m3 0h1m3 0h1m39 0h2m1 0h2m3 0h1m9 0h4m-114 1h1m14 0h3m15 0h3m9 0h1m1 0h1m17 0h1m-62 1h1m41 0h1m5 0h1m11 0h1m35 0h1m-113 1h1m4 0h1m51 0h1m1 0h1m41 0h1m20 0h1m-126 1h3m3 0h2m22 0h3m26 0h1m3 0h1m13 0h5m20 0h2m22 0h3m-93 1h1m47 0h1"/><path stroke="#bfbfbf" transform="translate(.5)" d="M0 0m606 378v5m6-3v3m4-3v4m2-5v5m18-6v5m4-2v2m4-1v2m10-7v7m8-5v5m23-2v1m3-5v2m4 2v2m10-7v7m2-5v2m2-4v7m2-5v4m4-4v5m4-7v7m16-6v1m4 1v3"/></g>
<g class="info-38"><title>Yang: 8, Yin: 5</title><path stroke="#bfbfbf" transform="translate(0 .5)" d="M0 0m643 387h3m22 0h1m21 0h5m-82 2h3m3 0h3m3 0h3m4 0h1m40 0h3m4 0h1m9 0h4m-87 1h1m1 0h1m33 0h3m15 0h1m1 0h1m-32 1h1m47 0h1m-66 1h1m74 0h1m-78 1h2m10 0h3m15 0h3m45 0h3m-45 1h1m-26 1h4"/><path stroke="#bfbfbf" transform="translate(.5)" d="M0 0m606 387v3m2 0v4m2-7v3m2 0v3m4-3v4m2-5v5m4-4v4m2-4v3m4-3v5m14-7v2m0 1v2m4-5v2m0 1v2m4-1v2m10-7v3m2 0v4m2-7v3m4-1v5m4-5v5m4-4v4m14-6v1m4 1v3"/></g>
<g class="info-39"><title>M: 7, N: 4, A: 5, D: 6</title><path stroke="#bfbfbf" transform="translate(0 .5)" d="M0 0m624 397h5m51 0h1m15 0h5m14 0h2m16 0h3m-129 1h1m1 0h1m33 0h1m35 0h1m1 0h1m35 0h1m18 0h1m-123 1h1m12 0h1m22 0h1m35 0h1m9 0h4m22 0h1m-97 1h1m33 0h3m1 0h1m68 0h3m-122 1h1m10 0h1m19 0h1m4 0h1m35 0h1m35 0h1m-45 1h5m13 0h1m20 0h1m-21 1h3m15 0h2m16 0h3m-105 1h1m35 0h1m35 0h1"/><path stroke="#bfbfbf" transform="translate(.5)" d="M0 0m606 397v7m2-5v2m2-4v7m14-2v2m4-6v1m4 3v2m10-7v7m2-5v2m2-4v7m14-7v3m3-3v7m5-2v2m10-5v3m0 1v1m4-5v3m0 1v1m14-6v1m4 1v3m4-1v2m10-7v7m4-5v3m14-4v5m4-2v2"/></g>
<g class="info-40"><title>Ang: 2, Suc: 8, Cad: 1</title><path stroke="#bfbfbf" transform="translate(0 .5)" d="M0 0m608 407h1m28 0h3m15 0h3m27 0h3m15 0h3m-99 1h1m1 0h1m26 0h1m21 0h1m47 0h1m26 0h1m-121 1h3m3 0h3m4 0h1m40 0h3m4 0h1m34 0h3m3 0h3m4 0h1m-84 1h1m15 0h3m12 0h1m14 0h3m-62 1h1m11 0h1m35 0h1m47 0h1m-117 1h5m43 0h1m8 0h1m6 0h1m35 0h1m4 0h1m-93 1h3m14 0h5m14 0h3m3 0h2m4 0h3m15 0h3m15 0h3m3 0h2m4 0h3m15 0h1m1 0h1m-93 1h1m47 0h1m-74 1h4"/><path stroke="#bfbfbf" transform="translate(.5)" d="M0 0m606 409v3m0 1v1m4-5v3m0 1v1m2-5v5m4-4v4m2-4v3m4-3v5m15-3v1m3-5v2m4 2v2m10-6v2m4 1v2m2-4v4m4-4v5m2-4v3m18-5v2m0 1v2m4-5v2m0 1v2m4-1v2m10-6v5m6-3v3m4-3v4m2-4v3m4-6v7m16-7v7"/></g>
<g class="info-41"><title>Learn: 7, Share: 6</title><path stroke="#bfbfbf" transform="translate(0 .5)" d="M0 0m648 417h5m14 0h3m39 0h3m-42 1h1m41 0h1m-100 1h3m3 0h3m3 0h3m3 0h3m4 0h1m12 0h1m21 0h3m3 0h3m3 0h3m3 0h3m4 0h1m-71 1h1m21 0h1m16 0h3m18 0h1m20 0h3m-100 1h5m21 0h1m10 0h1m40 0h5m3 0h1m-78 1h1m44 0h1m14 0h1m-75 1h4m2 0h4m2 0h2m46 0h3m9 0h2m10 0h4m14 0h3m-57 1h1"/><path stroke="#bfbfbf" transform="translate(.5)" d="M0 0m606 417v7m6-4v1m0 1v1m4-3v1m2-1v3m4-3v4m2-5v5m6-5v5m4-4v4m14-2v2m4-6v1m4 3v2m10-6v2m4 1v2m2-6v7m4-4v4m2-4v3m4-3v4m2-5v5m6-4v1m0 1v1m4-3v1m14-3v5m4-2v2"/></g>
</svg>
</body></html>
